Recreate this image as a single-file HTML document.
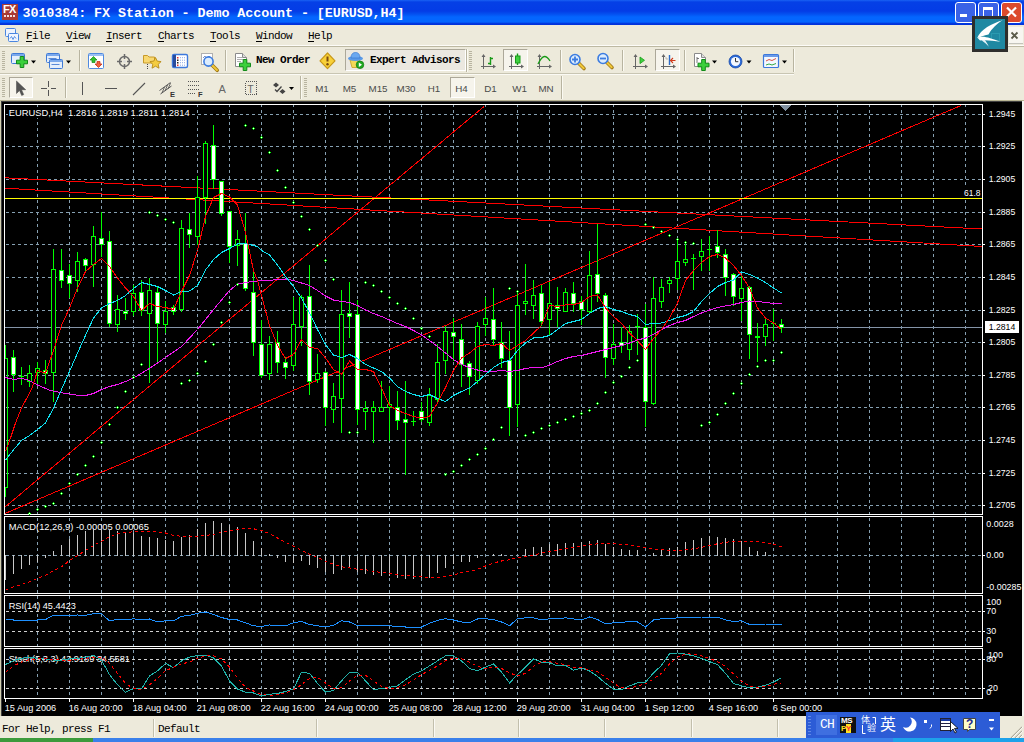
<!DOCTYPE html>
<html><head><meta charset="utf-8"><title>3010384: FX Station - Demo Account - [EURUSD,H4]</title>
<style>
html,body{margin:0;padding:0}
body{width:1024px;height:742px;position:relative;overflow:hidden;background:#edeadb;font-family:"Liberation Mono","Noto Sans CJK SC",monospace;font-size:11px;color:#000}
.abs,body>div,body>svg,body>span{position:absolute}
#title{left:0;top:0;width:1024px;height:25px;background:linear-gradient(#1a62f4 0,#0540e6 2px,#043ce6 11px,#0450f0 14px,#0466ff 17px,#0466ff 22px,#0238e0 23.5px,#0230d8 25px)}
#ttext{left:22.5px;top:6px;color:#fff;font-weight:bold;font-size:13.4px;letter-spacing:-0.08px;line-height:16px;white-space:pre}
.cap{top:2px;width:19px;height:19px;border:1px solid #fff;border-radius:3px;background:#3a62e6;box-sizing:content-box}
.mi{top:30px;font-size:11px;letter-spacing:-0.6px;line-height:12px;white-space:pre}
.mi u{text-decoration:underline;text-underline-offset:1.5px;text-decoration-thickness:1px}
.tbt{font-size:11px;letter-spacing:-0.6px;line-height:12px;white-space:pre;font-weight:bold}
.sep{width:1px;background:#c2bfac;box-shadow:1px 0 0 #fbfaf4}
.tf{top:83px;font-family:"Liberation Sans",sans-serif;font-size:9.8px;color:#4a4a4a;line-height:12px;width:30px;text-align:center}
.pressed{background:#f6f4ec;border:1px solid #c9c6b6;border-color:#aca899 #fff #fff #aca899;box-sizing:border-box}
.st{top:723px;font-size:11px;letter-spacing:-0.6px;line-height:12px;white-space:pre}
</style></head><body>
<div id="title"></div>
<div style="left:2px;top:4px;width:16px;height:16px;background:#a83a36"></div>
<span style="left:3px;top:4px;color:#fff;font:bold 11px/11px 'Liberation Sans',sans-serif;letter-spacing:-0.8px">FX</span>
<div style="left:4px;top:15px;width:12px;height:2px;background:repeating-linear-gradient(90deg,#f4e0e0 0,#f4e0e0 2px,transparent 2px,transparent 3px)"></div>
<span id="ttext">3010384: FX Station - Demo Account - [EURUSD,H4]</span>
<div class="cap" style="left:955px"></div><div class="cap" style="left:978px"></div><div class="cap" style="left:1001px;background:#dc4a2c"></div>
<!-- menu -->
<div style="left:0;top:45px;width:1024px;height:1px;background:#fdfcf8"></div>
<div style="left:0;top:46px;width:1024px;height:1px;background:#bdb9a2"></div>
<span class="mi" style="left:26px"><u>F</u>ile</span>
<span class="mi" style="left:66px"><u>V</u>iew</span>
<span class="mi" style="left:106px"><u>I</u>nsert</span>
<span class="mi" style="left:158px"><u>C</u>harts</span>
<span class="mi" style="left:210px"><u>T</u>ools</span>
<span class="mi" style="left:256px"><u>W</u>indow</span>
<span class="mi" style="left:308px"><u>H</u>elp</span>
<!-- toolbars -->
<div style="left:0;top:73px;width:794px;height:1px;background:#c8c5b2"></div>
<div style="left:0;top:74px;width:794px;height:1px;background:#fbfaf4"></div>
<span class="tbt" style="left:256px;top:54px">New Order</span>
<div class="pressed" style="left:345px;top:49px;width:121px;height:22px;background:#ebe8e0"></div>
<span class="tbt" style="left:370px;top:54px">Expert Advisors</span>
<div class="pressed" style="left:9px;top:77px;width:24px;height:21px"></div>
<div class="pressed" style="left:450px;top:77px;width:25px;height:21px"></div>
<div class="pressed" style="left:503px;top:49px;width:25px;height:22px"></div>
<div class="pressed" style="left:655px;top:49px;width:25px;height:22px"></div>
<span class="tf" style="left:307px">M1</span><span class="tf" style="left:334.5px">M5</span><span class="tf" style="left:363px">M15</span><span class="tf" style="left:391px">M30</span><span class="tf" style="left:419px">H1</span><span class="tf" style="left:446.5px">H4</span><span class="tf" style="left:475.5px">D1</span><span class="tf" style="left:504.5px">W1</span><span class="tf" style="left:531px">MN</span>
<svg id="icons" width="1024" height="101" viewBox="0 0 1024 101" style="left:0;top:0">
<g><rect x="5.5" y="28.5" width="10" height="8" rx="1" fill="#eef4fe" stroke="#4a86e0"/><rect x="8.5" y="33.5" width="10" height="8" rx="1" fill="#eef4fe" stroke="#4a86e0"/><path d="M10 38.5l1.5 -2 1.5 3 1.5 -3 1.5 2" fill="none" stroke="#4a86e0" stroke-width="0.9"/></g>
<line x1="3.5" y1="51" x2="3.5" y2="71" stroke="#b8b4a0" stroke-dasharray="1 1" stroke-width="3" shape-rendering="crispEdges"/>
<rect x="11.5" y="53.5" width="13" height="10" rx="1" fill="#e4eefc" stroke="#3f7ad6"/><rect x="12" y="54" width="12" height="2" fill="#7aa8ec"/>
<path d="M20.2 56.5h3.6v3.7h3.7v3.6h-3.7v3.7h-3.6v-3.7h-3.7v-3.6h3.7z" fill="#3bd03b" stroke="#118a18" stroke-width="1" stroke-linejoin="round"/>
<path d="M31 60.5h5l-2.5 3z" fill="#000"/>
<rect x="46.5" y="53.5" width="13" height="9" rx="1" fill="#e4eefc" stroke="#3f7ad6"/><rect x="47" y="54" width="12" height="2" fill="#7aa8ec"/>
<rect x="49.5" y="59.5" width="13" height="9" rx="1" fill="#e4eefc" stroke="#3f7ad6"/><rect x="50" y="60" width="12" height="2" fill="#7aa8ec"/>
<path d="M51.5 64.5h8" stroke="#5a8ad8" stroke-width="1"/><path d="M48.500 58.5h8" stroke="#5a8ad8" stroke-width="1"/>
<path d="M66 60.5h5l-2.5 3z" fill="#000"/>
<line x1="79.5" y1="50" x2="79.5" y2="71" stroke="#b8b4a0" shape-rendering="crispEdges"/><line x1="80.5" y1="50" x2="80.5" y2="71" stroke="#fbfaf2" shape-rendering="crispEdges"/>
<rect x="88.5" y="53.5" width="15" height="15" rx="1" fill="#fff" stroke="#4f8ae0"/><rect x="89" y="54" width="14" height="2" fill="#9cc0f4"/>
<path d="M93.500 56.5l3.500 3.500h-2v2.500h-3v-2.500h-2z" fill="#30c030" stroke="#148a14" stroke-width="0.7"/><path d="M98.500 67.500l-3.500 -3.500h2v-2.500h3v2.500h2z" fill="#f06040" stroke="#c02810" stroke-width="0.7"/>
<g stroke="#6a6a6a" fill="none"><circle cx="124.500" cy="61.5" r="5" stroke-width="1.500"/><path d="M124.500 54v5M124.500 64v5M117 61.500h5M127 61.500h5" stroke-width="1.500"/></g><circle cx="124.500" cy="61.5" r="1.300" fill="#ddd"/>
<path d="M143.500 55.500h4l1.500 1.500h5.500v6h-11z" fill="#f8d870" stroke="#c89a28"/><path d="M147.500 64v5" stroke="#444" stroke-dasharray="1 1" shape-rendering="crispEdges"/>
<path d="M155.500 57.500l1.700 3.600 3.900 0.500 -2.900 2.700 0.800 3.900 -3.500 -2 -3.500 2 0.800 -3.900 -2.900 -2.700 3.900 -0.500z" fill="#f4cc40" stroke="#b88a18" stroke-width="0.9"/>
<rect x="172.500" y="54.500" width="15" height="13" rx="1.500" fill="#fff" stroke="#3c78dc" stroke-width="1.400"/><rect x="173" y="55" width="3" height="12" fill="#2a4c9c"/>
<rect x="177" y="57.0" width="1.500" height="1.500" fill="#e03030"/><path d="M180 57.7h6" stroke="#8aa8e8" stroke-dasharray="1 1"/>
<rect x="177" y="59.5" width="1.500" height="1.500" fill="#222"/><path d="M180 60.2h6" stroke="#8aa8e8" stroke-dasharray="1 1"/>
<rect x="177" y="62.0" width="1.500" height="1.500" fill="#222"/><path d="M180 62.7h6" stroke="#8aa8e8" stroke-dasharray="1 1"/>
<rect x="177" y="64.5" width="1.500" height="1.500" fill="#e03030"/><path d="M180 65.2h6" stroke="#8aa8e8" stroke-dasharray="1 1"/>
<rect x="201.500" y="53.500" width="11" height="11" fill="#fff" stroke="#b0b0b0"/><path d="M203 58l2 -2 2 3 2 -3 2 2" fill="none" stroke="#5a7ab8" stroke-width="0.800"/>
<line x1="211.72" y1="64.72" x2="217.22" y2="70.22" stroke="#a07818" stroke-width="3.6" stroke-linecap="round"/><line x1="212.22" y1="65.22" x2="216.92" y2="69.92" stroke="#f0c838" stroke-width="2" stroke-linecap="round"/>
<circle cx="208.5" cy="61.5" r="4.6" fill="#dcecfc" stroke="#3c7ce0" stroke-width="1.6"/>
<line x1="225.5" y1="50" x2="225.5" y2="71" stroke="#b8b4a0" shape-rendering="crispEdges"/><line x1="226.5" y1="50" x2="226.5" y2="71" stroke="#fbfaf2" shape-rendering="crispEdges"/>
<path d="M235.5 53.5h7l4 4v9h-11z" fill="#fff" stroke="#8a8a8a"/><path d="M242.5 53.5v4h4" fill="#ddd" stroke="#8a8a8a"/>
<path d="M237 57.500h5M237 59.500h6M237 61.500h4" stroke="#9a9a9a" stroke-width="0.800"/>
<path d="M243.2 59.5h3.6v3.7h3.7v3.6h-3.7v3.7h-3.6v-3.7h-3.7v-3.6h3.7z" fill="#3bd03b" stroke="#118a18" stroke-width="1" stroke-linejoin="round"/>
<path d="M327.500 53l7.500 7.800 -7.500 7.800 -7.500 -7.800z" fill="#f8d038" stroke="#c89818" stroke-width="1.200" stroke-linejoin="round"/><path d="M327.500 56.500v5" stroke="#7a4a10" stroke-width="2"/><circle cx="327.500" cy="64.300" r="1.200" fill="#7a4a10"/>
<path d="M350 60h9.500l-1 7.500h-6.500z" fill="#f4d858" stroke="#c8a020" stroke-width="0.800"/><ellipse cx="355.500" cy="58.500" rx="7.500" ry="2.600" fill="#5a9ae8"/><path d="M351 58c0 -4 2 -5.500 4.500 -5.500s4.500 1.500 4.500 5.500z" fill="#6aa8f0" stroke="#3a78d0" stroke-width="0.700"/><circle cx="360" cy="64.800" r="3.800" fill="#20a820" stroke="#0c780c" stroke-width="0.700"/><path d="M358.800 62.600l3.200 2.200 -3.200 2.200z" fill="#fff"/>
<line x1="466.5" y1="49" x2="466.5" y2="72" stroke="#b8b4a0" shape-rendering="crispEdges"/><line x1="467.5" y1="49" x2="467.5" y2="72" stroke="#fbfaf2" shape-rendering="crispEdges"/>
<line x1="470.5" y1="51" x2="470.5" y2="71" stroke="#b8b4a0" stroke-dasharray="1 1" stroke-width="3" shape-rendering="crispEdges"/>
<g stroke="#666" fill="#666" shape-rendering="crispEdges"><line x1="483.5" y1="56" x2="483.5" y2="69"/><line x1="481" y1="66.5" x2="494" y2="66.5"/></g>
<path d="M483.5 54l2 3h-4zM496 66.5l-3 -2v4z" fill="#666"/>
<path d="M490.500 57v8M490.500 58.500h2.500M488 63.500h2.500" stroke="#189a18" stroke-width="1.400" fill="none"/>
<g stroke="#666" fill="#666" shape-rendering="crispEdges"><line x1="511.5" y1="56" x2="511.5" y2="69"/><line x1="509" y1="66.5" x2="522" y2="66.5"/></g>
<path d="M511.5 54l2 3h-4zM524 66.5l-3 -2v4z" fill="#666"/>
<path d="M517.500 53.500v11.500" stroke="#189a18" stroke-width="1.400"/><rect x="515.500" y="56" width="4.500" height="7" fill="#40d040" stroke="#189a18"/>
<g stroke="#666" fill="#666" shape-rendering="crispEdges"><line x1="539.5" y1="56" x2="539.5" y2="69"/><line x1="537" y1="66.5" x2="550" y2="66.5"/></g>
<path d="M539.5 54l2 3h-4zM552 66.5l-3 -2v4z" fill="#666"/>
<path d="M538 64c2 -4 4 -7.500 6.500 -7.500s4 2 5.500 4.500" fill="none" stroke="#189a18" stroke-width="1.300"/>
<line x1="560.5" y1="50" x2="560.5" y2="71" stroke="#b8b4a0" shape-rendering="crispEdges"/><line x1="561.5" y1="50" x2="561.5" y2="71" stroke="#fbfaf2" shape-rendering="crispEdges"/>
<line x1="578.5" y1="63.0" x2="584.0" y2="68.5" stroke="#a07818" stroke-width="3.6" stroke-linecap="round"/><line x1="579.0" y1="63.5" x2="583.7" y2="68.2" stroke="#f0c838" stroke-width="2" stroke-linecap="round"/>
<circle cx="575" cy="59.5" r="5" fill="#dcecfc" stroke="#3c7ce0" stroke-width="1.6"/>
<path d="M572 59.5h6M575 56.5v6" stroke="#3c7ce0" stroke-width="1.8"/>
<line x1="606.5" y1="62.0" x2="612.0" y2="67.5" stroke="#a07818" stroke-width="3.6" stroke-linecap="round"/><line x1="607.0" y1="62.5" x2="611.7" y2="67.2" stroke="#f0c838" stroke-width="2" stroke-linecap="round"/>
<circle cx="603" cy="58.5" r="5" fill="#dcecfc" stroke="#3c7ce0" stroke-width="1.6"/>
<path d="M600 58.5h6" stroke="#3c7ce0" stroke-width="1.8"/>
<line x1="622.5" y1="50" x2="622.5" y2="71" stroke="#b8b4a0" shape-rendering="crispEdges"/><line x1="623.5" y1="50" x2="623.5" y2="71" stroke="#fbfaf2" shape-rendering="crispEdges"/>
<g stroke="#666" fill="#666" shape-rendering="crispEdges"><line x1="635.5" y1="56" x2="635.5" y2="69"/><line x1="633" y1="66.5" x2="646" y2="66.5"/></g>
<path d="M635.5 54l2 3h-4zM648 66.5l-3 -2v4z" fill="#666"/>
<path d="M640 57l4.500 3.300 -4.500 3.300z" fill="#40d040" stroke="#189a18" stroke-width="0.800"/>
<g stroke="#666" fill="#666" shape-rendering="crispEdges"><line x1="663.5" y1="56" x2="663.5" y2="69"/><line x1="661" y1="66.5" x2="674" y2="66.5"/></g>
<path d="M663.5 54l2 3h-4zM676 66.5l-3 -2v4z" fill="#666"/>
<path d="M669.500 55v10" stroke="#2a6ac8" stroke-width="1.400"/><path d="M675.500 60.500h-4M673 58l-2.500 2.500 2.500 2.500" fill="none" stroke="#d03818" stroke-width="1.100"/><path d="M665 58h2v2" stroke="#aaa" fill="none" stroke-width="0.800"/>
<line x1="684.5" y1="50" x2="684.5" y2="71" stroke="#b8b4a0" shape-rendering="crispEdges"/><line x1="685.5" y1="50" x2="685.5" y2="71" stroke="#fbfaf2" shape-rendering="crispEdges"/>
<path d="M694.5 53.5h7l4 4v9h-11z" fill="#fff" stroke="#8a8a8a"/><path d="M701.5 53.5v4h4" fill="#ddd" stroke="#8a8a8a"/>
<path d="M697 57v6M697 58.500h2" stroke="#666" stroke-width="0.900" fill="none"/>
<path d="M701.7 59.5h3.6v3.7h3.7v3.6h-3.7v3.7h-3.6v-3.7h-3.7v-3.6h3.7z" fill="#3bd03b" stroke="#118a18" stroke-width="1" stroke-linejoin="round"/>
<path d="M712 60.5h5l-2.5 3z" fill="#000"/>
<circle cx="735.500" cy="61.500" r="6.500" fill="#2a6ad8" stroke="#1a4aa8" stroke-width="0.800"/><circle cx="735.500" cy="61.500" r="4.600" fill="#f4f8ff"/><path d="M735.500 58v3.700h2.800" fill="none" stroke="#333" stroke-width="1"/>
<path d="M746.5 60.5h5l-2.5 3z" fill="#000"/>
<rect x="763.500" y="54.500" width="15" height="13" rx="1" fill="#f4f8ff" stroke="#3c78dc" stroke-width="1.200"/><rect x="764" y="55" width="14" height="2" fill="#6a9ae8"/><path d="M766 61l3 -1.500 3 1 4 -2" fill="none" stroke="#d04030" stroke-width="0.900"/><path d="M766 65l3 -1 3 1 4 -1.500" fill="none" stroke="#20a030" stroke-width="0.900"/>
<path d="M782 60.5h5l-2.5 3z" fill="#000"/>
<line x1="793.5" y1="49" x2="793.5" y2="72" stroke="#b8b4a0" shape-rendering="crispEdges"/><line x1="794.5" y1="49" x2="794.5" y2="72" stroke="#fbfaf2" shape-rendering="crispEdges"/>
<line x1="3.5" y1="78" x2="3.5" y2="98" stroke="#b8b4a0" stroke-dasharray="1 1" stroke-width="3" shape-rendering="crispEdges"/>
<path d="M16.500 81v12.500l3 -3 2.200 5 2 -0.900 -2.200 -4.900h4.200z" fill="#555" stroke="#444" stroke-width="0.500"/>
<path d="M48.500 81v5.500M48.500 90v5.500M41 88.500h5.500M50.500 88.500h5.500" stroke="#555" shape-rendering="crispEdges"/>
<line x1="65.5" y1="77" x2="65.5" y2="98" stroke="#b8b4a0" shape-rendering="crispEdges"/><line x1="66.5" y1="77" x2="66.5" y2="98" stroke="#fbfaf2" shape-rendering="crispEdges"/>
<path d="M82.500 82v13" stroke="#555" shape-rendering="crispEdges"/>
<path d="M105 88.500h12" stroke="#555" shape-rendering="crispEdges"/>
<path d="M133 95l12 -12" stroke="#555" stroke-width="1.100"/>
<path d="M159.500 90.500l11 -8M160.500 94l11 -8" stroke="#555" stroke-width="1" fill="none"/><path d="M162 93l2.500 -6M165 91l2.500 -6M168 89l2.500 -6" stroke="#555" stroke-width="0.900"/>
<text x="170" y="96.500" font-family="Liberation Sans,sans-serif" font-size="7.5" font-weight="bold" fill="#333">E</text>
<path d="M188 81.5H200" stroke="#555" stroke-dasharray="1 1" shape-rendering="crispEdges"/>
<path d="M188 85.5H200" stroke="#555" stroke-dasharray="1 1" shape-rendering="crispEdges"/>
<path d="M188 89.5H200" stroke="#555" stroke-dasharray="1 1" shape-rendering="crispEdges"/>
<path d="M188 93.5H196" stroke="#555" stroke-dasharray="1 1" shape-rendering="crispEdges"/>
<text x="198" y="96.500" font-family="Liberation Sans,sans-serif" font-size="7.5" font-weight="bold" fill="#333">F</text>
<text x="218.500" y="92.500" font-family="Liberation Sans,sans-serif" font-size="11" fill="#666">A</text>
<rect x="245.500" y="81.500" width="11" height="13" fill="none" stroke="#555" stroke-dasharray="1 1" shape-rendering="crispEdges"/><text x="247.500" y="92.500" font-family="Liberation Sans,sans-serif" font-size="10" fill="#666">T</text>
<path d="M276 82.500l3 2.500 -3 2.500 -3 -2.500zM282.500 89l3 2.500 -3 2.500 -3 -2.500z" fill="#444"/><path d="M275 89.500l2 2 4.500 -5" fill="none" stroke="#444" stroke-width="1.300"/>
<path d="M289 87h5l-2.5 3z" fill="#000"/>
<line x1="300.5" y1="76" x2="300.5" y2="99" stroke="#b8b4a0" shape-rendering="crispEdges"/><line x1="301.5" y1="76" x2="301.5" y2="99" stroke="#fbfaf2" shape-rendering="crispEdges"/>
<line x1="305.5" y1="78" x2="305.5" y2="98" stroke="#b8b4a0" stroke-dasharray="1 1" stroke-width="3" shape-rendering="crispEdges"/>
<line x1="561.5" y1="76" x2="561.5" y2="99" stroke="#b8b4a0" shape-rendering="crispEdges"/><line x1="562.5" y1="76" x2="562.5" y2="99" stroke="#fbfaf2" shape-rendering="crispEdges"/>
<rect x="960" y="14" width="7" height="3" fill="#fff"/>
<rect x="983.500" y="7.500" width="9" height="9" fill="none" stroke="#fff" stroke-width="1"/><rect x="983" y="7" width="10" height="3" fill="#fff"/>
<path d="M1007 7.500l9 9M1016 7.500l-9 9" stroke="#fff" stroke-width="2.200"/>
<rect x="1009" y="27" width="14" height="17" fill="#f7f6f0"/><path d="M1009 43.500h14" stroke="#c4c4bc"/><path d="M1011.500 32.500l6 6M1017.500 32.500l-6 6" stroke="#5a5a48" stroke-width="1.800"/>
<rect x="973.5" y="17.5" width="33" height="33" fill="#1f88a2" stroke="#2e2e2c" stroke-width="3"/>
<rect x="991.500" y="33.500" width="8" height="7" fill="none" stroke="#2a9ab0" stroke-width="1"/>
<path d="M1002.600 20.300C992 23.500 980.500 29.500 977.200 38C980 37 984 35.500 988.500 34.500C991.500 29 997 23.500 1002.600 20.300Z" fill="#fff"/>
<path d="M977.500 37.800C983 35.300 990 38 1000.500 41.800C993 40.800 986 39.600 980 40.500Z" fill="#fff"/>
<path d="M981.500 40.200C984 42 987 44 988.800 46.800C987.200 43.200 985.800 41.200 984.800 39.800Z" fill="#e4f2f8"/>
</svg>
<!-- chart window -->
<div style="left:0;top:100px;width:1024px;height:1px;background:#b9b594"></div>
<div style="left:0;top:101px;width:1px;height:615px;background:#d4d0b0"></div>
<div style="left:1022px;top:101px;width:2px;height:615px;background:#f4f4f0"></div>
<div style="left:1px;top:101px;width:1021px;height:615px;background:#000"></div>
<div style="left:1px;top:101px;width:1px;height:615px;background:#404040"></div>
<div style="left:1px;top:101px;width:1021px;height:1px;background:#404040"></div>
<svg id="chart" width="1024" height="742" viewBox="0 0 1024 742" shape-rendering="crispEdges" xml:space="preserve" style="white-space:pre" font-family="'Liberation Sans',Arial,sans-serif" font-size="9.7">
<rect x="4.5" y="104.5" width="978" height="410" fill="none" stroke="#fff"/>
<rect x="4.5" y="516.5" width="978" height="77" fill="none" stroke="#fff"/>
<rect x="4.5" y="595.5" width="978" height="51" fill="none" stroke="#fff"/>
<rect x="4.5" y="648.5" width="978" height="50" fill="none" stroke="#fff"/>
<line x1="37.5" y1="105" x2="37.5" y2="514" stroke="#86a0b2" stroke-dasharray="3 3" stroke-dashoffset="1"/>
<line x1="69.5" y1="105" x2="69.5" y2="514" stroke="#86a0b2" stroke-dasharray="3 3" stroke-dashoffset="1"/>
<line x1="101.5" y1="105" x2="101.5" y2="514" stroke="#86a0b2" stroke-dasharray="3 3" stroke-dashoffset="1"/>
<line x1="133.5" y1="105" x2="133.5" y2="514" stroke="#86a0b2" stroke-dasharray="3 3" stroke-dashoffset="1"/>
<line x1="165.5" y1="105" x2="165.5" y2="514" stroke="#86a0b2" stroke-dasharray="3 3" stroke-dashoffset="1"/>
<line x1="197.5" y1="105" x2="197.5" y2="514" stroke="#86a0b2" stroke-dasharray="3 3" stroke-dashoffset="1"/>
<line x1="229.5" y1="105" x2="229.5" y2="514" stroke="#86a0b2" stroke-dasharray="3 3" stroke-dashoffset="1"/>
<line x1="261.5" y1="105" x2="261.5" y2="514" stroke="#86a0b2" stroke-dasharray="3 3" stroke-dashoffset="1"/>
<line x1="293.5" y1="105" x2="293.5" y2="514" stroke="#86a0b2" stroke-dasharray="3 3" stroke-dashoffset="1"/>
<line x1="325.5" y1="105" x2="325.5" y2="514" stroke="#86a0b2" stroke-dasharray="3 3" stroke-dashoffset="1"/>
<line x1="357.5" y1="105" x2="357.5" y2="514" stroke="#86a0b2" stroke-dasharray="3 3" stroke-dashoffset="1"/>
<line x1="389.5" y1="105" x2="389.5" y2="514" stroke="#86a0b2" stroke-dasharray="3 3" stroke-dashoffset="1"/>
<line x1="421.5" y1="105" x2="421.5" y2="514" stroke="#86a0b2" stroke-dasharray="3 3" stroke-dashoffset="1"/>
<line x1="453.5" y1="105" x2="453.5" y2="514" stroke="#86a0b2" stroke-dasharray="3 3" stroke-dashoffset="1"/>
<line x1="485.5" y1="105" x2="485.5" y2="514" stroke="#86a0b2" stroke-dasharray="3 3" stroke-dashoffset="1"/>
<line x1="517.5" y1="105" x2="517.5" y2="514" stroke="#86a0b2" stroke-dasharray="3 3" stroke-dashoffset="1"/>
<line x1="549.5" y1="105" x2="549.5" y2="514" stroke="#86a0b2" stroke-dasharray="3 3" stroke-dashoffset="1"/>
<line x1="581.5" y1="105" x2="581.5" y2="514" stroke="#86a0b2" stroke-dasharray="3 3" stroke-dashoffset="1"/>
<line x1="613.5" y1="105" x2="613.5" y2="514" stroke="#86a0b2" stroke-dasharray="3 3" stroke-dashoffset="1"/>
<line x1="645.5" y1="105" x2="645.5" y2="514" stroke="#86a0b2" stroke-dasharray="3 3" stroke-dashoffset="1"/>
<line x1="677.5" y1="105" x2="677.5" y2="514" stroke="#86a0b2" stroke-dasharray="3 3" stroke-dashoffset="1"/>
<line x1="709.5" y1="105" x2="709.5" y2="514" stroke="#86a0b2" stroke-dasharray="3 3" stroke-dashoffset="1"/>
<line x1="741.5" y1="105" x2="741.5" y2="514" stroke="#86a0b2" stroke-dasharray="3 3" stroke-dashoffset="1"/>
<line x1="773.5" y1="105" x2="773.5" y2="514" stroke="#86a0b2" stroke-dasharray="3 3" stroke-dashoffset="1"/>
<line x1="805.5" y1="105" x2="805.5" y2="514" stroke="#86a0b2" stroke-dasharray="3 3" stroke-dashoffset="1"/>
<line x1="837.5" y1="105" x2="837.5" y2="514" stroke="#86a0b2" stroke-dasharray="3 3" stroke-dashoffset="1"/>
<line x1="869.5" y1="105" x2="869.5" y2="514" stroke="#86a0b2" stroke-dasharray="3 3" stroke-dashoffset="1"/>
<line x1="901.5" y1="105" x2="901.5" y2="514" stroke="#86a0b2" stroke-dasharray="3 3" stroke-dashoffset="1"/>
<line x1="933.5" y1="105" x2="933.5" y2="514" stroke="#86a0b2" stroke-dasharray="3 3" stroke-dashoffset="1"/>
<line x1="965.5" y1="105" x2="965.5" y2="514" stroke="#86a0b2" stroke-dasharray="3 3" stroke-dashoffset="1"/>
<line x1="37.5" y1="517" x2="37.5" y2="593" stroke="#86a0b2" stroke-dasharray="3 3" stroke-dashoffset="5"/>
<line x1="69.5" y1="517" x2="69.5" y2="593" stroke="#86a0b2" stroke-dasharray="3 3" stroke-dashoffset="5"/>
<line x1="101.5" y1="517" x2="101.5" y2="593" stroke="#86a0b2" stroke-dasharray="3 3" stroke-dashoffset="5"/>
<line x1="133.5" y1="517" x2="133.5" y2="593" stroke="#86a0b2" stroke-dasharray="3 3" stroke-dashoffset="5"/>
<line x1="165.5" y1="517" x2="165.5" y2="593" stroke="#86a0b2" stroke-dasharray="3 3" stroke-dashoffset="5"/>
<line x1="197.5" y1="517" x2="197.5" y2="593" stroke="#86a0b2" stroke-dasharray="3 3" stroke-dashoffset="5"/>
<line x1="229.5" y1="517" x2="229.5" y2="593" stroke="#86a0b2" stroke-dasharray="3 3" stroke-dashoffset="5"/>
<line x1="261.5" y1="517" x2="261.5" y2="593" stroke="#86a0b2" stroke-dasharray="3 3" stroke-dashoffset="5"/>
<line x1="293.5" y1="517" x2="293.5" y2="593" stroke="#86a0b2" stroke-dasharray="3 3" stroke-dashoffset="5"/>
<line x1="325.5" y1="517" x2="325.5" y2="593" stroke="#86a0b2" stroke-dasharray="3 3" stroke-dashoffset="5"/>
<line x1="357.5" y1="517" x2="357.5" y2="593" stroke="#86a0b2" stroke-dasharray="3 3" stroke-dashoffset="5"/>
<line x1="389.5" y1="517" x2="389.5" y2="593" stroke="#86a0b2" stroke-dasharray="3 3" stroke-dashoffset="5"/>
<line x1="421.5" y1="517" x2="421.5" y2="593" stroke="#86a0b2" stroke-dasharray="3 3" stroke-dashoffset="5"/>
<line x1="453.5" y1="517" x2="453.5" y2="593" stroke="#86a0b2" stroke-dasharray="3 3" stroke-dashoffset="5"/>
<line x1="485.5" y1="517" x2="485.5" y2="593" stroke="#86a0b2" stroke-dasharray="3 3" stroke-dashoffset="5"/>
<line x1="517.5" y1="517" x2="517.5" y2="593" stroke="#86a0b2" stroke-dasharray="3 3" stroke-dashoffset="5"/>
<line x1="549.5" y1="517" x2="549.5" y2="593" stroke="#86a0b2" stroke-dasharray="3 3" stroke-dashoffset="5"/>
<line x1="581.5" y1="517" x2="581.5" y2="593" stroke="#86a0b2" stroke-dasharray="3 3" stroke-dashoffset="5"/>
<line x1="613.5" y1="517" x2="613.5" y2="593" stroke="#86a0b2" stroke-dasharray="3 3" stroke-dashoffset="5"/>
<line x1="645.5" y1="517" x2="645.5" y2="593" stroke="#86a0b2" stroke-dasharray="3 3" stroke-dashoffset="5"/>
<line x1="677.5" y1="517" x2="677.5" y2="593" stroke="#86a0b2" stroke-dasharray="3 3" stroke-dashoffset="5"/>
<line x1="709.5" y1="517" x2="709.5" y2="593" stroke="#86a0b2" stroke-dasharray="3 3" stroke-dashoffset="5"/>
<line x1="741.5" y1="517" x2="741.5" y2="593" stroke="#86a0b2" stroke-dasharray="3 3" stroke-dashoffset="5"/>
<line x1="773.5" y1="517" x2="773.5" y2="593" stroke="#86a0b2" stroke-dasharray="3 3" stroke-dashoffset="5"/>
<line x1="805.5" y1="517" x2="805.5" y2="593" stroke="#86a0b2" stroke-dasharray="3 3" stroke-dashoffset="5"/>
<line x1="837.5" y1="517" x2="837.5" y2="593" stroke="#86a0b2" stroke-dasharray="3 3" stroke-dashoffset="5"/>
<line x1="869.5" y1="517" x2="869.5" y2="593" stroke="#86a0b2" stroke-dasharray="3 3" stroke-dashoffset="5"/>
<line x1="901.5" y1="517" x2="901.5" y2="593" stroke="#86a0b2" stroke-dasharray="3 3" stroke-dashoffset="5"/>
<line x1="933.5" y1="517" x2="933.5" y2="593" stroke="#86a0b2" stroke-dasharray="3 3" stroke-dashoffset="5"/>
<line x1="965.5" y1="517" x2="965.5" y2="593" stroke="#86a0b2" stroke-dasharray="3 3" stroke-dashoffset="5"/>
<line x1="37.5" y1="596" x2="37.5" y2="646" stroke="#86a0b2" stroke-dasharray="3 3" stroke-dashoffset="0"/>
<line x1="69.5" y1="596" x2="69.5" y2="646" stroke="#86a0b2" stroke-dasharray="3 3" stroke-dashoffset="0"/>
<line x1="101.5" y1="596" x2="101.5" y2="646" stroke="#86a0b2" stroke-dasharray="3 3" stroke-dashoffset="0"/>
<line x1="133.5" y1="596" x2="133.5" y2="646" stroke="#86a0b2" stroke-dasharray="3 3" stroke-dashoffset="0"/>
<line x1="165.5" y1="596" x2="165.5" y2="646" stroke="#86a0b2" stroke-dasharray="3 3" stroke-dashoffset="0"/>
<line x1="197.5" y1="596" x2="197.5" y2="646" stroke="#86a0b2" stroke-dasharray="3 3" stroke-dashoffset="0"/>
<line x1="229.5" y1="596" x2="229.5" y2="646" stroke="#86a0b2" stroke-dasharray="3 3" stroke-dashoffset="0"/>
<line x1="261.5" y1="596" x2="261.5" y2="646" stroke="#86a0b2" stroke-dasharray="3 3" stroke-dashoffset="0"/>
<line x1="293.5" y1="596" x2="293.5" y2="646" stroke="#86a0b2" stroke-dasharray="3 3" stroke-dashoffset="0"/>
<line x1="325.5" y1="596" x2="325.5" y2="646" stroke="#86a0b2" stroke-dasharray="3 3" stroke-dashoffset="0"/>
<line x1="357.5" y1="596" x2="357.5" y2="646" stroke="#86a0b2" stroke-dasharray="3 3" stroke-dashoffset="0"/>
<line x1="389.5" y1="596" x2="389.5" y2="646" stroke="#86a0b2" stroke-dasharray="3 3" stroke-dashoffset="0"/>
<line x1="421.5" y1="596" x2="421.5" y2="646" stroke="#86a0b2" stroke-dasharray="3 3" stroke-dashoffset="0"/>
<line x1="453.5" y1="596" x2="453.5" y2="646" stroke="#86a0b2" stroke-dasharray="3 3" stroke-dashoffset="0"/>
<line x1="485.5" y1="596" x2="485.5" y2="646" stroke="#86a0b2" stroke-dasharray="3 3" stroke-dashoffset="0"/>
<line x1="517.5" y1="596" x2="517.5" y2="646" stroke="#86a0b2" stroke-dasharray="3 3" stroke-dashoffset="0"/>
<line x1="549.5" y1="596" x2="549.5" y2="646" stroke="#86a0b2" stroke-dasharray="3 3" stroke-dashoffset="0"/>
<line x1="581.5" y1="596" x2="581.5" y2="646" stroke="#86a0b2" stroke-dasharray="3 3" stroke-dashoffset="0"/>
<line x1="613.5" y1="596" x2="613.5" y2="646" stroke="#86a0b2" stroke-dasharray="3 3" stroke-dashoffset="0"/>
<line x1="645.5" y1="596" x2="645.5" y2="646" stroke="#86a0b2" stroke-dasharray="3 3" stroke-dashoffset="0"/>
<line x1="677.5" y1="596" x2="677.5" y2="646" stroke="#86a0b2" stroke-dasharray="3 3" stroke-dashoffset="0"/>
<line x1="709.5" y1="596" x2="709.5" y2="646" stroke="#86a0b2" stroke-dasharray="3 3" stroke-dashoffset="0"/>
<line x1="741.5" y1="596" x2="741.5" y2="646" stroke="#86a0b2" stroke-dasharray="3 3" stroke-dashoffset="0"/>
<line x1="773.5" y1="596" x2="773.5" y2="646" stroke="#86a0b2" stroke-dasharray="3 3" stroke-dashoffset="0"/>
<line x1="805.5" y1="596" x2="805.5" y2="646" stroke="#86a0b2" stroke-dasharray="3 3" stroke-dashoffset="0"/>
<line x1="837.5" y1="596" x2="837.5" y2="646" stroke="#86a0b2" stroke-dasharray="3 3" stroke-dashoffset="0"/>
<line x1="869.5" y1="596" x2="869.5" y2="646" stroke="#86a0b2" stroke-dasharray="3 3" stroke-dashoffset="0"/>
<line x1="901.5" y1="596" x2="901.5" y2="646" stroke="#86a0b2" stroke-dasharray="3 3" stroke-dashoffset="0"/>
<line x1="933.5" y1="596" x2="933.5" y2="646" stroke="#86a0b2" stroke-dasharray="3 3" stroke-dashoffset="0"/>
<line x1="965.5" y1="596" x2="965.5" y2="646" stroke="#86a0b2" stroke-dasharray="3 3" stroke-dashoffset="0"/>
<line x1="37.5" y1="649" x2="37.5" y2="698" stroke="#86a0b2" stroke-dasharray="3 3" stroke-dashoffset="5"/>
<line x1="69.5" y1="649" x2="69.5" y2="698" stroke="#86a0b2" stroke-dasharray="3 3" stroke-dashoffset="5"/>
<line x1="101.5" y1="649" x2="101.5" y2="698" stroke="#86a0b2" stroke-dasharray="3 3" stroke-dashoffset="5"/>
<line x1="133.5" y1="649" x2="133.5" y2="698" stroke="#86a0b2" stroke-dasharray="3 3" stroke-dashoffset="5"/>
<line x1="165.5" y1="649" x2="165.5" y2="698" stroke="#86a0b2" stroke-dasharray="3 3" stroke-dashoffset="5"/>
<line x1="197.5" y1="649" x2="197.5" y2="698" stroke="#86a0b2" stroke-dasharray="3 3" stroke-dashoffset="5"/>
<line x1="229.5" y1="649" x2="229.5" y2="698" stroke="#86a0b2" stroke-dasharray="3 3" stroke-dashoffset="5"/>
<line x1="261.5" y1="649" x2="261.5" y2="698" stroke="#86a0b2" stroke-dasharray="3 3" stroke-dashoffset="5"/>
<line x1="293.5" y1="649" x2="293.5" y2="698" stroke="#86a0b2" stroke-dasharray="3 3" stroke-dashoffset="5"/>
<line x1="325.5" y1="649" x2="325.5" y2="698" stroke="#86a0b2" stroke-dasharray="3 3" stroke-dashoffset="5"/>
<line x1="357.5" y1="649" x2="357.5" y2="698" stroke="#86a0b2" stroke-dasharray="3 3" stroke-dashoffset="5"/>
<line x1="389.5" y1="649" x2="389.5" y2="698" stroke="#86a0b2" stroke-dasharray="3 3" stroke-dashoffset="5"/>
<line x1="421.5" y1="649" x2="421.5" y2="698" stroke="#86a0b2" stroke-dasharray="3 3" stroke-dashoffset="5"/>
<line x1="453.5" y1="649" x2="453.5" y2="698" stroke="#86a0b2" stroke-dasharray="3 3" stroke-dashoffset="5"/>
<line x1="485.5" y1="649" x2="485.5" y2="698" stroke="#86a0b2" stroke-dasharray="3 3" stroke-dashoffset="5"/>
<line x1="517.5" y1="649" x2="517.5" y2="698" stroke="#86a0b2" stroke-dasharray="3 3" stroke-dashoffset="5"/>
<line x1="549.5" y1="649" x2="549.5" y2="698" stroke="#86a0b2" stroke-dasharray="3 3" stroke-dashoffset="5"/>
<line x1="581.5" y1="649" x2="581.5" y2="698" stroke="#86a0b2" stroke-dasharray="3 3" stroke-dashoffset="5"/>
<line x1="613.5" y1="649" x2="613.5" y2="698" stroke="#86a0b2" stroke-dasharray="3 3" stroke-dashoffset="5"/>
<line x1="645.5" y1="649" x2="645.5" y2="698" stroke="#86a0b2" stroke-dasharray="3 3" stroke-dashoffset="5"/>
<line x1="677.5" y1="649" x2="677.5" y2="698" stroke="#86a0b2" stroke-dasharray="3 3" stroke-dashoffset="5"/>
<line x1="709.5" y1="649" x2="709.5" y2="698" stroke="#86a0b2" stroke-dasharray="3 3" stroke-dashoffset="5"/>
<line x1="741.5" y1="649" x2="741.5" y2="698" stroke="#86a0b2" stroke-dasharray="3 3" stroke-dashoffset="5"/>
<line x1="773.5" y1="649" x2="773.5" y2="698" stroke="#86a0b2" stroke-dasharray="3 3" stroke-dashoffset="5"/>
<line x1="805.5" y1="649" x2="805.5" y2="698" stroke="#86a0b2" stroke-dasharray="3 3" stroke-dashoffset="5"/>
<line x1="837.5" y1="649" x2="837.5" y2="698" stroke="#86a0b2" stroke-dasharray="3 3" stroke-dashoffset="5"/>
<line x1="869.5" y1="649" x2="869.5" y2="698" stroke="#86a0b2" stroke-dasharray="3 3" stroke-dashoffset="5"/>
<line x1="901.5" y1="649" x2="901.5" y2="698" stroke="#86a0b2" stroke-dasharray="3 3" stroke-dashoffset="5"/>
<line x1="933.5" y1="649" x2="933.5" y2="698" stroke="#86a0b2" stroke-dasharray="3 3" stroke-dashoffset="5"/>
<line x1="965.5" y1="649" x2="965.5" y2="698" stroke="#86a0b2" stroke-dasharray="3 3" stroke-dashoffset="5"/>
<line x1="5" y1="114.5" x2="982" y2="114.5" stroke="#86a0b2" stroke-width="1" stroke-dasharray="3 3" stroke-dashoffset="5"/>
<line x1="983" y1="114.5" x2="985" y2="114.5" stroke="#fff" stroke-width="1"/>
<text x="988.7" y="117" fill="#fff" text-anchor="start" textLength="26.6" lengthAdjust="spacingAndGlyphs">1.2945</text>
<line x1="5" y1="146.5" x2="982" y2="146.5" stroke="#86a0b2" stroke-width="1" stroke-dasharray="3 3" stroke-dashoffset="5"/>
<line x1="983" y1="146.5" x2="985" y2="146.5" stroke="#fff" stroke-width="1"/>
<text x="988.7" y="149" fill="#fff" text-anchor="start" textLength="26.6" lengthAdjust="spacingAndGlyphs">1.2925</text>
<line x1="5" y1="179.5" x2="982" y2="179.5" stroke="#86a0b2" stroke-width="1" stroke-dasharray="3 3" stroke-dashoffset="5"/>
<line x1="983" y1="179.5" x2="985" y2="179.5" stroke="#fff" stroke-width="1"/>
<text x="988.7" y="182" fill="#fff" text-anchor="start" textLength="26.6" lengthAdjust="spacingAndGlyphs">1.2905</text>
<line x1="5" y1="212.5" x2="982" y2="212.5" stroke="#86a0b2" stroke-width="1" stroke-dasharray="3 3" stroke-dashoffset="5"/>
<line x1="983" y1="212.5" x2="985" y2="212.5" stroke="#fff" stroke-width="1"/>
<text x="988.7" y="215" fill="#fff" text-anchor="start" textLength="26.6" lengthAdjust="spacingAndGlyphs">1.2885</text>
<line x1="5" y1="244.5" x2="982" y2="244.5" stroke="#86a0b2" stroke-width="1" stroke-dasharray="3 3" stroke-dashoffset="5"/>
<line x1="983" y1="244.5" x2="985" y2="244.5" stroke="#fff" stroke-width="1"/>
<text x="988.7" y="247" fill="#fff" text-anchor="start" textLength="26.6" lengthAdjust="spacingAndGlyphs">1.2865</text>
<line x1="5" y1="277.5" x2="982" y2="277.5" stroke="#86a0b2" stroke-width="1" stroke-dasharray="3 3" stroke-dashoffset="5"/>
<line x1="983" y1="277.5" x2="985" y2="277.5" stroke="#fff" stroke-width="1"/>
<text x="988.7" y="280" fill="#fff" text-anchor="start" textLength="26.6" lengthAdjust="spacingAndGlyphs">1.2845</text>
<line x1="5" y1="310.5" x2="982" y2="310.5" stroke="#86a0b2" stroke-width="1" stroke-dasharray="3 3" stroke-dashoffset="5"/>
<line x1="983" y1="310.5" x2="985" y2="310.5" stroke="#fff" stroke-width="1"/>
<text x="988.7" y="313" fill="#fff" text-anchor="start" textLength="26.6" lengthAdjust="spacingAndGlyphs">1.2825</text>
<line x1="5" y1="342.5" x2="982" y2="342.5" stroke="#86a0b2" stroke-width="1" stroke-dasharray="3 3" stroke-dashoffset="5"/>
<line x1="983" y1="342.5" x2="985" y2="342.5" stroke="#fff" stroke-width="1"/>
<text x="988.7" y="345" fill="#fff" text-anchor="start" textLength="26.6" lengthAdjust="spacingAndGlyphs">1.2805</text>
<line x1="5" y1="375.5" x2="982" y2="375.5" stroke="#86a0b2" stroke-width="1" stroke-dasharray="3 3" stroke-dashoffset="5"/>
<line x1="983" y1="375.5" x2="985" y2="375.5" stroke="#fff" stroke-width="1"/>
<text x="988.7" y="378" fill="#fff" text-anchor="start" textLength="26.6" lengthAdjust="spacingAndGlyphs">1.2785</text>
<line x1="5" y1="407.5" x2="982" y2="407.5" stroke="#86a0b2" stroke-width="1" stroke-dasharray="3 3" stroke-dashoffset="5"/>
<line x1="983" y1="407.5" x2="985" y2="407.5" stroke="#fff" stroke-width="1"/>
<text x="988.7" y="410" fill="#fff" text-anchor="start" textLength="26.6" lengthAdjust="spacingAndGlyphs">1.2765</text>
<line x1="5" y1="440.5" x2="982" y2="440.5" stroke="#86a0b2" stroke-width="1" stroke-dasharray="3 3" stroke-dashoffset="5"/>
<line x1="983" y1="440.5" x2="985" y2="440.5" stroke="#fff" stroke-width="1"/>
<text x="988.7" y="443" fill="#fff" text-anchor="start" textLength="26.6" lengthAdjust="spacingAndGlyphs">1.2745</text>
<line x1="5" y1="473.5" x2="982" y2="473.5" stroke="#86a0b2" stroke-width="1" stroke-dasharray="3 3" stroke-dashoffset="5"/>
<line x1="983" y1="473.5" x2="985" y2="473.5" stroke="#fff" stroke-width="1"/>
<text x="988.7" y="476" fill="#fff" text-anchor="start" textLength="26.6" lengthAdjust="spacingAndGlyphs">1.2725</text>
<line x1="5" y1="505.5" x2="982" y2="505.5" stroke="#86a0b2" stroke-width="1" stroke-dasharray="3 3" stroke-dashoffset="5"/>
<line x1="983" y1="505.5" x2="985" y2="505.5" stroke="#fff" stroke-width="1"/>
<text x="988.7" y="508" fill="#fff" text-anchor="start" textLength="26.6" lengthAdjust="spacingAndGlyphs">1.2705</text>
<rect x="8" y="107" width="183" height="11" fill="#000"/>
<text x="8.7" y="116" fill="#fff" text-anchor="start" textLength="181.0" lengthAdjust="spacingAndGlyphs">EURUSD,H4&#160;&#160;1.2816 1.2819 1.2811 1.2814</text>
<line x1="5.5" y1="699" x2="5.5" y2="702" stroke="#fff"/>
<text x="4.7" y="710.6" fill="#fff" text-anchor="start" textLength="51.5" lengthAdjust="spacingAndGlyphs">15 Aug 2006</text>
<line x1="69.5" y1="699" x2="69.5" y2="702" stroke="#fff"/>
<text x="68.7" y="710.6" fill="#fff" text-anchor="start" textLength="54.0" lengthAdjust="spacingAndGlyphs">16 Aug 20:00</text>
<line x1="133.5" y1="699" x2="133.5" y2="702" stroke="#fff"/>
<text x="132.7" y="710.6" fill="#fff" text-anchor="start" textLength="54.0" lengthAdjust="spacingAndGlyphs">18 Aug 04:00</text>
<line x1="197.5" y1="699" x2="197.5" y2="702" stroke="#fff"/>
<text x="196.7" y="710.6" fill="#fff" text-anchor="start" textLength="54.0" lengthAdjust="spacingAndGlyphs">21 Aug 08:00</text>
<line x1="261.5" y1="699" x2="261.5" y2="702" stroke="#fff"/>
<text x="260.7" y="710.6" fill="#fff" text-anchor="start" textLength="54.0" lengthAdjust="spacingAndGlyphs">22 Aug 16:00</text>
<line x1="325.5" y1="699" x2="325.5" y2="702" stroke="#fff"/>
<text x="324.7" y="710.6" fill="#fff" text-anchor="start" textLength="54.0" lengthAdjust="spacingAndGlyphs">24 Aug 00:00</text>
<line x1="389.5" y1="699" x2="389.5" y2="702" stroke="#fff"/>
<text x="388.7" y="710.6" fill="#fff" text-anchor="start" textLength="54.0" lengthAdjust="spacingAndGlyphs">25 Aug 08:00</text>
<line x1="453.5" y1="699" x2="453.5" y2="702" stroke="#fff"/>
<text x="452.7" y="710.6" fill="#fff" text-anchor="start" textLength="54.0" lengthAdjust="spacingAndGlyphs">28 Aug 12:00</text>
<line x1="517.5" y1="699" x2="517.5" y2="702" stroke="#fff"/>
<text x="516.7" y="710.6" fill="#fff" text-anchor="start" textLength="54.0" lengthAdjust="spacingAndGlyphs">29 Aug 20:00</text>
<line x1="581.5" y1="699" x2="581.5" y2="702" stroke="#fff"/>
<text x="580.7" y="710.6" fill="#fff" text-anchor="start" textLength="54.0" lengthAdjust="spacingAndGlyphs">31 Aug 04:00</text>
<line x1="645.5" y1="699" x2="645.5" y2="702" stroke="#fff"/>
<text x="644.7" y="710.6" fill="#fff" text-anchor="start" textLength="49.4" lengthAdjust="spacingAndGlyphs">1 Sep 12:00</text>
<line x1="709.5" y1="699" x2="709.5" y2="702" stroke="#fff"/>
<text x="708.7" y="710.6" fill="#fff" text-anchor="start" textLength="49.4" lengthAdjust="spacingAndGlyphs">4 Sep 16:00</text>
<line x1="773.5" y1="699" x2="773.5" y2="702" stroke="#fff"/>
<text x="772.7" y="710.6" fill="#fff" text-anchor="start" textLength="49.4" lengthAdjust="spacingAndGlyphs">6 Sep 00:00</text>
<g stroke="#ff0000" fill="none">
<line x1="5" y1="177.8" x2="982" y2="229"/>
<line x1="5" y1="188.2" x2="982" y2="246.5"/>
<line x1="5" y1="507" x2="484" y2="106.5"/>
<line x1="5" y1="513.5" x2="961" y2="105.5"/>
</g>
<line x1="5" y1="198.5" x2="982" y2="198.5" stroke="#ffff00" stroke-width="1"/>
<rect x="962" y="188" width="19" height="9" fill="#000"/>
<text x="980.5" y="195.6" fill="#fff" text-anchor="end" font-size="9.2" textLength="16.5" lengthAdjust="spacingAndGlyphs">61.8</text>
<line x1="5" y1="327.5" x2="982" y2="327.5" stroke="#8494a8" stroke-width="1"/>
<line x1="5.5" y1="345" x2="5.5" y2="359" stroke="#00ff00"/>
<path d="M5 358.5H7.5V487.5H5" fill="none" stroke="#00ff00"/>
<line x1="5.5" y1="487" x2="5.5" y2="497" stroke="#00ff00"/>
<line x1="13.5" y1="350" x2="13.5" y2="392" stroke="#00ff00"/>
<rect x="11.5" y="357.5" width="4" height="17" fill="#fff" stroke="#00ff00"/>
<line x1="21.5" y1="367" x2="21.5" y2="385" stroke="#00ff00"/>
<line x1="19" y1="376.5" x2="24" y2="376.5" stroke="#00ff00" stroke-width="1"/>
<line x1="29.5" y1="365" x2="29.5" y2="387" stroke="#00ff00"/>
<rect x="27.5" y="373.5" width="4" height="8" fill="#000" stroke="#00ff00"/>
<line x1="37.5" y1="362" x2="37.5" y2="384" stroke="#00ff00"/>
<rect x="35.5" y="368.5" width="4" height="4" fill="#000" stroke="#00ff00"/>
<line x1="45.5" y1="360" x2="45.5" y2="384" stroke="#00ff00"/>
<rect x="43.5" y="370.5" width="4" height="3" fill="#fff" stroke="#00ff00"/>
<line x1="53.5" y1="249" x2="53.5" y2="402" stroke="#00ff00"/>
<rect x="51.5" y="269.5" width="4" height="103" fill="#000" stroke="#00ff00"/>
<line x1="61.5" y1="249" x2="61.5" y2="288" stroke="#00ff00"/>
<rect x="59.5" y="270.5" width="4" height="10" fill="#fff" stroke="#00ff00"/>
<line x1="69.5" y1="264" x2="69.5" y2="298" stroke="#00ff00"/>
<rect x="67.5" y="275.5" width="4" height="8" fill="#fff" stroke="#00ff00"/>
<line x1="77.5" y1="252" x2="77.5" y2="292" stroke="#00ff00"/>
<rect x="75.5" y="261.5" width="4" height="19" fill="#000" stroke="#00ff00"/>
<line x1="85.5" y1="258" x2="85.5" y2="273" stroke="#00ff00"/>
<rect x="83.5" y="259.5" width="4" height="6" fill="#fff" stroke="#00ff00"/>
<line x1="93.5" y1="226" x2="93.5" y2="287" stroke="#00ff00"/>
<rect x="91.5" y="236.5" width="4" height="28" fill="#000" stroke="#00ff00"/>
<line x1="101.5" y1="212" x2="101.5" y2="257" stroke="#00ff00"/>
<rect x="99.5" y="238.5" width="4" height="6" fill="#fff" stroke="#00ff00"/>
<line x1="109.5" y1="231" x2="109.5" y2="327" stroke="#00ff00"/>
<rect x="107.5" y="241.5" width="4" height="82" fill="#fff" stroke="#00ff00"/>
<line x1="117.5" y1="295" x2="117.5" y2="332" stroke="#00ff00"/>
<rect x="115.5" y="309.5" width="4" height="15" fill="#000" stroke="#00ff00"/>
<line x1="125.5" y1="298" x2="125.5" y2="320" stroke="#00ff00"/>
<rect x="123.5" y="311.5" width="4" height="2" fill="#fff" stroke="#00ff00"/>
<line x1="133.5" y1="285" x2="133.5" y2="316" stroke="#00ff00"/>
<rect x="131.5" y="293.5" width="4" height="18" fill="#000" stroke="#00ff00"/>
<line x1="141.5" y1="280" x2="141.5" y2="316" stroke="#00ff00"/>
<rect x="139.5" y="292.5" width="4" height="18" fill="#fff" stroke="#00ff00"/>
<line x1="149.5" y1="278" x2="149.5" y2="383" stroke="#00ff00"/>
<rect x="147.5" y="290.5" width="4" height="23" fill="#000" stroke="#00ff00"/>
<line x1="157.5" y1="287" x2="157.5" y2="363" stroke="#00ff00"/>
<rect x="155.5" y="292.5" width="4" height="31" fill="#fff" stroke="#00ff00"/>
<line x1="165.5" y1="301" x2="165.5" y2="333" stroke="#00ff00"/>
<rect x="163.5" y="311.5" width="4" height="13" fill="#000" stroke="#00ff00"/>
<line x1="173.5" y1="305" x2="173.5" y2="315" stroke="#00ff00"/>
<rect x="171.5" y="307.5" width="4" height="4" fill="#fff" stroke="#00ff00"/>
<line x1="181.5" y1="220" x2="181.5" y2="312" stroke="#00ff00"/>
<rect x="179.5" y="228.5" width="4" height="81" fill="#000" stroke="#00ff00"/>
<line x1="189.5" y1="213" x2="189.5" y2="248" stroke="#00ff00"/>
<rect x="187.5" y="229.5" width="4" height="5" fill="#fff" stroke="#00ff00"/>
<line x1="197.5" y1="176" x2="197.5" y2="245" stroke="#00ff00"/>
<rect x="195.5" y="197.5" width="4" height="39" fill="#000" stroke="#00ff00"/>
<line x1="205.5" y1="141" x2="205.5" y2="224" stroke="#00ff00"/>
<rect x="203.5" y="143.5" width="4" height="54" fill="#000" stroke="#00ff00"/>
<line x1="213.5" y1="125" x2="213.5" y2="189" stroke="#00ff00"/>
<rect x="211.5" y="145.5" width="4" height="34" fill="#fff" stroke="#00ff00"/>
<line x1="221.5" y1="181" x2="221.5" y2="216" stroke="#00ff00"/>
<rect x="219.5" y="181.5" width="4" height="32" fill="#fff" stroke="#00ff00"/>
<line x1="229.5" y1="211" x2="229.5" y2="263" stroke="#00ff00"/>
<rect x="227.5" y="211.5" width="4" height="35" fill="#fff" stroke="#00ff00"/>
<line x1="237.5" y1="230" x2="237.5" y2="266" stroke="#00ff00"/>
<rect x="235.5" y="239.5" width="4" height="6" fill="#000" stroke="#00ff00"/>
<line x1="245.5" y1="213" x2="245.5" y2="291" stroke="#00ff00"/>
<rect x="243.5" y="243.5" width="4" height="45" fill="#fff" stroke="#00ff00"/>
<line x1="253.5" y1="271" x2="253.5" y2="356" stroke="#00ff00"/>
<rect x="251.5" y="292.5" width="4" height="50" fill="#fff" stroke="#00ff00"/>
<line x1="261.5" y1="320" x2="261.5" y2="378" stroke="#00ff00"/>
<rect x="259.5" y="344.5" width="4" height="31" fill="#fff" stroke="#00ff00"/>
<line x1="269.5" y1="336" x2="269.5" y2="380" stroke="#00ff00"/>
<rect x="267.5" y="344.5" width="4" height="29" fill="#000" stroke="#00ff00"/>
<line x1="277.5" y1="331" x2="277.5" y2="373" stroke="#00ff00"/>
<rect x="275.5" y="342.5" width="4" height="20" fill="#fff" stroke="#00ff00"/>
<line x1="285.5" y1="357" x2="285.5" y2="379" stroke="#00ff00"/>
<rect x="283.5" y="362.5" width="4" height="5" fill="#fff" stroke="#00ff00"/>
<line x1="293.5" y1="297" x2="293.5" y2="371" stroke="#00ff00"/>
<rect x="291.5" y="324.5" width="4" height="41" fill="#000" stroke="#00ff00"/>
<line x1="301.5" y1="295" x2="301.5" y2="346" stroke="#00ff00"/>
<rect x="299.5" y="297.5" width="4" height="29" fill="#000" stroke="#00ff00"/>
<line x1="309.5" y1="265" x2="309.5" y2="395" stroke="#00ff00"/>
<rect x="307.5" y="296.5" width="4" height="85" fill="#fff" stroke="#00ff00"/>
<line x1="317.5" y1="354" x2="317.5" y2="383" stroke="#00ff00"/>
<rect x="315.5" y="373.5" width="4" height="6" fill="#000" stroke="#00ff00"/>
<line x1="325.5" y1="371" x2="325.5" y2="426" stroke="#00ff00"/>
<rect x="323.5" y="372.5" width="4" height="35" fill="#fff" stroke="#00ff00"/>
<line x1="333.5" y1="383" x2="333.5" y2="423" stroke="#00ff00"/>
<rect x="331.5" y="396.5" width="4" height="13" fill="#000" stroke="#00ff00"/>
<line x1="341.5" y1="290" x2="341.5" y2="433" stroke="#00ff00"/>
<rect x="339.5" y="314.5" width="4" height="84" fill="#000" stroke="#00ff00"/>
<line x1="349.5" y1="282" x2="349.5" y2="338" stroke="#00ff00"/>
<rect x="347.5" y="313.5" width="4" height="3" fill="#fff" stroke="#00ff00"/>
<line x1="357.5" y1="300" x2="357.5" y2="425" stroke="#00ff00"/>
<rect x="355.5" y="314.5" width="4" height="95" fill="#fff" stroke="#00ff00"/>
<line x1="365.5" y1="401" x2="365.5" y2="430" stroke="#00ff00"/>
<rect x="363.5" y="408.5" width="4" height="3" fill="#000" stroke="#00ff00"/>
<line x1="373.5" y1="401" x2="373.5" y2="443" stroke="#00ff00"/>
<rect x="371.5" y="407.5" width="4" height="4" fill="#000" stroke="#00ff00"/>
<line x1="381.5" y1="381" x2="381.5" y2="412" stroke="#00ff00"/>
<rect x="379.5" y="407.5" width="4" height="4" fill="#000" stroke="#00ff00"/>
<line x1="389.5" y1="386" x2="389.5" y2="441" stroke="#00ff00"/>
<rect x="387.5" y="404.5" width="4" height="3" fill="#000" stroke="#00ff00"/>
<line x1="397.5" y1="391" x2="397.5" y2="430" stroke="#00ff00"/>
<rect x="395.5" y="407.5" width="4" height="13" fill="#fff" stroke="#00ff00"/>
<line x1="405.5" y1="381" x2="405.5" y2="475" stroke="#00ff00"/>
<rect x="403.5" y="419.5" width="4" height="3" fill="#fff" stroke="#00ff00"/>
<line x1="413.5" y1="411" x2="413.5" y2="426" stroke="#00ff00"/>
<line x1="411" y1="421.5" x2="416" y2="421.5" stroke="#00ff00" stroke-width="1"/>
<line x1="421.5" y1="402" x2="421.5" y2="422" stroke="#00ff00"/>
<rect x="419.5" y="411.5" width="4" height="8" fill="#fff" stroke="#00ff00"/>
<line x1="429.5" y1="388" x2="429.5" y2="426" stroke="#00ff00"/>
<rect x="427.5" y="395.5" width="4" height="27" fill="#000" stroke="#00ff00"/>
<line x1="437.5" y1="344" x2="437.5" y2="403" stroke="#00ff00"/>
<rect x="435.5" y="362.5" width="4" height="37" fill="#000" stroke="#00ff00"/>
<line x1="445.5" y1="326" x2="445.5" y2="374" stroke="#00ff00"/>
<rect x="443.5" y="331.5" width="4" height="29" fill="#000" stroke="#00ff00"/>
<line x1="453.5" y1="318" x2="453.5" y2="361" stroke="#00ff00"/>
<rect x="451.5" y="332.5" width="4" height="4" fill="#fff" stroke="#00ff00"/>
<line x1="461.5" y1="324" x2="461.5" y2="387" stroke="#00ff00"/>
<rect x="459.5" y="339.5" width="4" height="25" fill="#fff" stroke="#00ff00"/>
<line x1="469.5" y1="361" x2="469.5" y2="395" stroke="#00ff00"/>
<rect x="467.5" y="363.5" width="4" height="13" fill="#fff" stroke="#00ff00"/>
<line x1="477.5" y1="322" x2="477.5" y2="384" stroke="#00ff00"/>
<rect x="475.5" y="326.5" width="4" height="54" fill="#000" stroke="#00ff00"/>
<line x1="485.5" y1="297" x2="485.5" y2="336" stroke="#00ff00"/>
<rect x="483.5" y="318.5" width="4" height="6" fill="#000" stroke="#00ff00"/>
<line x1="493.5" y1="288" x2="493.5" y2="345" stroke="#00ff00"/>
<rect x="491.5" y="319.5" width="4" height="20" fill="#fff" stroke="#00ff00"/>
<line x1="501.5" y1="322" x2="501.5" y2="368" stroke="#00ff00"/>
<rect x="499.5" y="342.5" width="4" height="16" fill="#fff" stroke="#00ff00"/>
<line x1="509.5" y1="331" x2="509.5" y2="436" stroke="#00ff00"/>
<rect x="507.5" y="360.5" width="4" height="47" fill="#fff" stroke="#00ff00"/>
<line x1="517.5" y1="290" x2="517.5" y2="427" stroke="#00ff00"/>
<rect x="515.5" y="305.5" width="4" height="99" fill="#000" stroke="#00ff00"/>
<line x1="525.5" y1="264" x2="525.5" y2="315" stroke="#00ff00"/>
<rect x="523.5" y="301.5" width="4" height="2" fill="#000" stroke="#00ff00"/>
<line x1="533.5" y1="280" x2="533.5" y2="319" stroke="#00ff00"/>
<rect x="531.5" y="295.5" width="4" height="10" fill="#000" stroke="#00ff00"/>
<line x1="541.5" y1="285" x2="541.5" y2="326" stroke="#00ff00"/>
<rect x="539.5" y="293.5" width="4" height="28" fill="#fff" stroke="#00ff00"/>
<line x1="549.5" y1="282" x2="549.5" y2="336" stroke="#00ff00"/>
<rect x="547.5" y="303.5" width="4" height="16" fill="#000" stroke="#00ff00"/>
<line x1="557.5" y1="287" x2="557.5" y2="327" stroke="#00ff00"/>
<rect x="555.5" y="305.5" width="4" height="3" fill="#fff" stroke="#00ff00"/>
<line x1="565.5" y1="288" x2="565.5" y2="312" stroke="#00ff00"/>
<rect x="563.5" y="292.5" width="4" height="19" fill="#000" stroke="#00ff00"/>
<line x1="573.5" y1="282" x2="573.5" y2="312" stroke="#00ff00"/>
<rect x="571.5" y="293.5" width="4" height="10" fill="#fff" stroke="#00ff00"/>
<line x1="581.5" y1="296" x2="581.5" y2="325" stroke="#00ff00"/>
<rect x="579.5" y="301.5" width="4" height="8" fill="#fff" stroke="#00ff00"/>
<line x1="589.5" y1="251" x2="589.5" y2="314" stroke="#00ff00"/>
<rect x="587.5" y="275.5" width="4" height="36" fill="#000" stroke="#00ff00"/>
<line x1="597.5" y1="224" x2="597.5" y2="302" stroke="#00ff00"/>
<rect x="595.5" y="274.5" width="4" height="19" fill="#fff" stroke="#00ff00"/>
<line x1="605.5" y1="293" x2="605.5" y2="378" stroke="#00ff00"/>
<rect x="603.5" y="295.5" width="4" height="62" fill="#fff" stroke="#00ff00"/>
<line x1="613.5" y1="324" x2="613.5" y2="365" stroke="#00ff00"/>
<rect x="611.5" y="344.5" width="4" height="14" fill="#000" stroke="#00ff00"/>
<line x1="621.5" y1="327" x2="621.5" y2="353" stroke="#00ff00"/>
<rect x="619.5" y="342.5" width="4" height="3" fill="#fff" stroke="#00ff00"/>
<line x1="629.5" y1="325" x2="629.5" y2="360" stroke="#00ff00"/>
<rect x="627.5" y="331.5" width="4" height="18" fill="#000" stroke="#00ff00"/>
<line x1="637.5" y1="314" x2="637.5" y2="355" stroke="#00ff00"/>
<line x1="635" y1="326.5" x2="640" y2="326.5" stroke="#00ff00" stroke-width="1"/>
<line x1="645.5" y1="304" x2="645.5" y2="427" stroke="#00ff00"/>
<rect x="643.5" y="327.5" width="4" height="74" fill="#fff" stroke="#00ff00"/>
<line x1="653.5" y1="277" x2="653.5" y2="405" stroke="#00ff00"/>
<rect x="651.5" y="298.5" width="4" height="105" fill="#000" stroke="#00ff00"/>
<line x1="661.5" y1="279" x2="661.5" y2="308" stroke="#00ff00"/>
<rect x="659.5" y="287.5" width="4" height="14" fill="#000" stroke="#00ff00"/>
<line x1="669.5" y1="277" x2="669.5" y2="293" stroke="#00ff00"/>
<rect x="667.5" y="280.5" width="4" height="3" fill="#000" stroke="#00ff00"/>
<line x1="677.5" y1="238" x2="677.5" y2="290" stroke="#00ff00"/>
<rect x="675.5" y="261.5" width="4" height="17" fill="#000" stroke="#00ff00"/>
<line x1="685.5" y1="241" x2="685.5" y2="266" stroke="#00ff00"/>
<rect x="683.5" y="259.5" width="4" height="3" fill="#000" stroke="#00ff00"/>
<line x1="693.5" y1="254" x2="693.5" y2="290" stroke="#00ff00"/>
<line x1="691" y1="258.5" x2="696" y2="258.5" stroke="#00ff00" stroke-width="1"/>
<line x1="701.5" y1="239" x2="701.5" y2="271" stroke="#00ff00"/>
<rect x="699.5" y="251.5" width="4" height="5" fill="#000" stroke="#00ff00"/>
<line x1="709.5" y1="236" x2="709.5" y2="271" stroke="#00ff00"/>
<line x1="707" y1="249.5" x2="712" y2="249.5" stroke="#00ff00" stroke-width="1"/>
<line x1="717.5" y1="230" x2="717.5" y2="258" stroke="#00ff00"/>
<rect x="715.5" y="246.5" width="4" height="6" fill="#fff" stroke="#00ff00"/>
<line x1="725.5" y1="249" x2="725.5" y2="296" stroke="#00ff00"/>
<rect x="723.5" y="254.5" width="4" height="23" fill="#fff" stroke="#00ff00"/>
<line x1="733.5" y1="273" x2="733.5" y2="306" stroke="#00ff00"/>
<rect x="731.5" y="274.5" width="4" height="22" fill="#fff" stroke="#00ff00"/>
<line x1="741.5" y1="275" x2="741.5" y2="321" stroke="#00ff00"/>
<rect x="739.5" y="288.5" width="4" height="10" fill="#000" stroke="#00ff00"/>
<line x1="749.5" y1="286" x2="749.5" y2="359" stroke="#00ff00"/>
<rect x="747.5" y="287.5" width="4" height="47" fill="#fff" stroke="#00ff00"/>
<line x1="757.5" y1="323" x2="757.5" y2="362" stroke="#00ff00"/>
<rect x="755" y="336" width="5" height="2" fill="#00ff00"/>
<line x1="765.5" y1="317" x2="765.5" y2="346" stroke="#00ff00"/>
<rect x="763.5" y="324.5" width="4" height="12" fill="#000" stroke="#00ff00"/>
<line x1="773.5" y1="309" x2="773.5" y2="341" stroke="#00ff00"/>
<line x1="771" y1="323.5" x2="776" y2="323.5" stroke="#00ff00" stroke-width="1"/>
<line x1="781.5" y1="319" x2="781.5" y2="333" stroke="#00ff00"/>
<rect x="779.5" y="324.5" width="4" height="3" fill="#fff" stroke="#00ff00"/>
<polyline points="5.5,377.5 9.5,378.5 14.5,379.5 20.5,378.5 26.5,379.5 31.5,381.5 37.5,385.0 50.5,390.5 62.5,393.0 75.5,395.0 85.5,395.5 93.5,393.5 101.5,389.5 109.5,386.5 117.5,384.5 125.5,381.5 133.5,378.0 149.5,368.5 165.5,357.5 181.5,346.5 197.5,329.5 213.5,309.5 229.5,290.5 237.5,284.0 245.5,282.5 253.5,281.5 261.5,280.5 269.5,280.5 277.5,279.5 285.5,279.0 293.5,280.5 301.5,283.0 309.5,285.5 317.5,290.5 325.5,296.0 333.5,300.0 341.5,301.5 349.5,302.5 357.5,305.5 365.5,310.0 373.5,313.5 381.5,316.5 389.5,320.0 397.5,323.5 405.5,326.5 413.5,330.5 421.5,335.0 429.5,340.5 437.5,346.5 445.5,353.0 453.5,359.5 461.5,364.5 469.5,367.5 477.5,370.0 485.5,371.5 493.5,371.5 501.5,370.5 509.5,371.5 517.5,370.5 525.5,368.5 533.5,367.5 541.5,368.0 549.5,365.0 557.5,361.5 565.5,358.5 573.5,356.5 581.5,355.5 589.5,353.5 597.5,351.5 605.5,349.5 613.5,347.5 621.5,345.5 629.5,343.0 637.5,340.0 645.5,338.0 653.5,334.5 661.5,329.5 669.5,325.5 677.5,322.5 685.5,320.5 693.5,316.5 701.5,313.0 709.5,310.0 717.5,307.5 725.5,306.0 733.5,304.5 741.5,302.5 749.5,301.0 757.5,301.5 765.5,302.5 773.5,303.5 781.5,303.5" fill="none" stroke="#f018f0" stroke-width="1"/>
<polyline points="5.5,460.0 13.0,450.5 21.5,440.5 29.5,435.5 37.5,429.5 45.5,423.0 53.5,408.0 61.5,389.5 69.5,371.5 77.5,353.0 85.5,335.5 93.5,318.0 101.5,308.0 109.5,303.5 117.5,300.5 125.5,295.5 133.5,288.5 141.5,282.5 149.5,284.5 157.5,286.5 165.5,290.5 173.5,295.0 181.5,291.5 189.5,291.0 197.5,285.5 205.5,270.0 213.5,259.5 221.5,252.5 229.5,248.5 237.5,244.0 245.5,243.5 253.5,245.5 257.5,246.5 261.5,250.5 269.5,255.0 277.5,265.0 285.5,276.5 293.5,286.5 301.5,298.0 309.5,313.0 317.5,329.5 325.5,344.5 333.5,355.0 341.5,357.5 349.5,354.5 357.5,358.5 365.5,364.5 373.5,368.0 381.5,371.5 389.5,378.0 397.5,386.5 405.5,391.5 413.5,394.5 421.5,396.5 429.5,394.5 437.5,398.5 445.5,401.5 453.5,395.5 461.5,391.5 469.5,388.0 477.5,381.5 485.5,374.5 493.5,367.5 501.5,362.5 509.5,360.5 517.5,350.5 525.5,343.0 533.5,338.0 541.5,337.5 549.5,335.5 557.5,329.5 565.5,323.5 573.5,321.5 581.5,319.5 589.5,313.5 597.5,308.5 605.5,306.5 613.5,309.5 621.5,311.5 629.5,314.5 637.5,316.5 645.5,324.5 653.5,323.5 661.5,323.0 669.5,320.5 677.5,317.5 685.5,315.5 693.5,311.5 701.5,301.5 709.5,293.5 717.5,286.5 725.5,282.5 733.5,280.0 741.5,272.0 749.5,274.5 757.5,278.0 765.5,282.5 773.5,288.0 781.5,293.0" fill="none" stroke="#10e0f0" stroke-width="1"/>
<polyline points="5.5,451.5 10.5,438.0 15.5,423.0 21.5,408.0 29.5,393.0 33.0,385.5 37.5,370.5 45.5,373.0 53.5,350.5 61.5,325.5 69.5,308.0 77.5,288.0 85.5,271.5 93.5,264.5 101.5,258.5 109.5,266.5 117.5,278.0 125.5,288.0 133.5,296.5 141.5,310.5 149.5,303.5 157.5,306.5 165.5,307.5 173.5,309.5 181.5,291.5 189.5,275.5 197.5,250.5 205.5,216.5 213.5,197.5 221.5,193.5 229.5,197.0 237.5,205.0 245.5,232.5 253.5,270.5 257.5,280.5 261.5,295.5 269.5,325.5 277.5,345.5 285.5,358.5 293.5,354.5 301.5,339.5 309.5,347.5 317.5,348.5 325.5,358.0 333.5,369.5 341.5,374.5 349.5,361.0 357.5,369.5 365.5,369.5 373.5,371.5 381.5,388.0 389.5,405.5 397.5,410.5 405.5,413.5 413.5,416.5 421.5,418.0 429.5,416.5 437.5,403.0 445.5,387.5 453.5,370.5 461.5,358.0 469.5,353.0 477.5,346.5 485.5,344.5 493.5,345.5 501.5,343.5 509.5,350.5 517.5,345.5 525.5,340.5 533.5,333.0 541.5,325.5 549.5,305.5 557.5,306.5 565.5,305.0 573.5,304.5 581.5,302.5 589.5,296.5 597.5,295.0 605.5,308.0 613.5,316.5 621.5,323.5 629.5,333.0 637.5,340.5 645.5,349.5 653.5,338.5 661.5,329.5 669.5,318.0 677.5,303.0 685.5,280.5 693.5,270.5 701.5,262.5 709.5,256.5 717.5,254.5 725.5,258.0 733.5,265.5 741.5,275.5 749.5,288.0 757.5,308.0 765.5,318.0 773.5,323.0 781.5,329.5" fill="none" stroke="#ff0000" stroke-width="1"/>
<path d="M28 513.5H31M29.5 512V515" stroke="#00ff00"/><rect x="29" y="513" width="1" height="1" fill="#fff"/>
<path d="M36 509.5H39M37.5 508V511" stroke="#00ff00"/><rect x="37" y="509" width="1" height="1" fill="#fff"/>
<path d="M44 506.5H47M45.5 505V508" stroke="#00ff00"/><rect x="45" y="506" width="1" height="1" fill="#fff"/>
<path d="M52 503.5H55M53.5 502V505" stroke="#00ff00"/><rect x="53" y="503" width="1" height="1" fill="#fff"/>
<path d="M60 493.5H63M61.5 492V495" stroke="#00ff00"/><rect x="61" y="493" width="1" height="1" fill="#fff"/>
<path d="M68 483.5H71M69.5 482V485" stroke="#00ff00"/><rect x="69" y="483" width="1" height="1" fill="#fff"/>
<path d="M76 474.5H79M77.5 473V476" stroke="#00ff00"/><rect x="77" y="474" width="1" height="1" fill="#fff"/>
<path d="M84 465.5H87M85.5 464V467" stroke="#00ff00"/><rect x="85" y="465" width="1" height="1" fill="#fff"/>
<path d="M92 456.5H95M93.5 455V458" stroke="#00ff00"/><rect x="93" y="456" width="1" height="1" fill="#fff"/>
<path d="M100 442.5H103M101.5 441V444" stroke="#00ff00"/><rect x="101" y="442" width="1" height="1" fill="#fff"/>
<path d="M108 424.5H111M109.5 423V426" stroke="#00ff00"/><rect x="109" y="424" width="1" height="1" fill="#fff"/>
<path d="M116 407.5H119M117.5 406V409" stroke="#00ff00"/><rect x="117" y="407" width="1" height="1" fill="#fff"/>
<path d="M124 391.5H127M125.5 390V393" stroke="#00ff00"/><rect x="125" y="391" width="1" height="1" fill="#fff"/>
<path d="M132 377.5H135M133.5 376V379" stroke="#00ff00"/><rect x="133" y="377" width="1" height="1" fill="#fff"/>
<path d="M140 364.5H143M141.5 363V366" stroke="#00ff00"/><rect x="141" y="364" width="1" height="1" fill="#fff"/>
<path d="M148 212.5H151M149.5 211V214" stroke="#00ff00"/><rect x="149" y="212" width="1" height="1" fill="#fff"/>
<path d="M156 215.5H159M157.5 214V217" stroke="#00ff00"/><rect x="157" y="215" width="1" height="1" fill="#fff"/>
<path d="M164 219.5H167M165.5 218V221" stroke="#00ff00"/><rect x="165" y="219" width="1" height="1" fill="#fff"/>
<path d="M172 222.5H175M173.5 221V224" stroke="#00ff00"/><rect x="173" y="222" width="1" height="1" fill="#fff"/>
<path d="M180 383.5H183M181.5 382V385" stroke="#00ff00"/><rect x="181" y="383" width="1" height="1" fill="#fff"/>
<path d="M188 380.5H191M189.5 379V382" stroke="#00ff00"/><rect x="189" y="380" width="1" height="1" fill="#fff"/>
<path d="M196 373.5H199M197.5 372V375" stroke="#00ff00"/><rect x="197" y="373" width="1" height="1" fill="#fff"/>
<path d="M204 361.5H207M205.5 360V363" stroke="#00ff00"/><rect x="205" y="361" width="1" height="1" fill="#fff"/>
<path d="M212 344.5H215M213.5 343V346" stroke="#00ff00"/><rect x="213" y="344" width="1" height="1" fill="#fff"/>
<path d="M220 322.5H223M221.5 321V324" stroke="#00ff00"/><rect x="221" y="322" width="1" height="1" fill="#fff"/>
<path d="M228 302.5H231M229.5 301V304" stroke="#00ff00"/><rect x="229" y="302" width="1" height="1" fill="#fff"/>
<path d="M236 284.5H239M237.5 283V286" stroke="#00ff00"/><rect x="237" y="284" width="1" height="1" fill="#fff"/>
<path d="M244 125.5H247M245.5 124V127" stroke="#00ff00"/><rect x="245" y="125" width="1" height="1" fill="#fff"/>
<path d="M252 128.5H255M253.5 127V130" stroke="#00ff00"/><rect x="253" y="128" width="1" height="1" fill="#fff"/>
<path d="M260 137.5H263M261.5 136V139" stroke="#00ff00"/><rect x="261" y="137" width="1" height="1" fill="#fff"/>
<path d="M268 152.5H271M269.5 151V154" stroke="#00ff00"/><rect x="269" y="152" width="1" height="1" fill="#fff"/>
<path d="M276 170.5H279M277.5 169V172" stroke="#00ff00"/><rect x="277" y="170" width="1" height="1" fill="#fff"/>
<path d="M284 187.5H287M285.5 186V189" stroke="#00ff00"/><rect x="285" y="187" width="1" height="1" fill="#fff"/>
<path d="M292 202.5H295M293.5 201V204" stroke="#00ff00"/><rect x="293" y="202" width="1" height="1" fill="#fff"/>
<path d="M300 216.5H303M301.5 215V218" stroke="#00ff00"/><rect x="301" y="216" width="1" height="1" fill="#fff"/>
<path d="M308 229.5H311M309.5 228V231" stroke="#00ff00"/><rect x="309" y="229" width="1" height="1" fill="#fff"/>
<path d="M316 245.5H319M317.5 244V247" stroke="#00ff00"/><rect x="317" y="245" width="1" height="1" fill="#fff"/>
<path d="M324 260.5H327M325.5 259V262" stroke="#00ff00"/><rect x="325" y="260" width="1" height="1" fill="#fff"/>
<path d="M332 279.5H335M333.5 278V281" stroke="#00ff00"/><rect x="333" y="279" width="1" height="1" fill="#fff"/>
<path d="M348 432.5H351M349.5 431V434" stroke="#00ff00"/><rect x="349" y="432" width="1" height="1" fill="#fff"/>
<path d="M356 432.5H359M357.5 431V434" stroke="#00ff00"/><rect x="357" y="432" width="1" height="1" fill="#fff"/>
<path d="M364 282.5H367M365.5 281V284" stroke="#00ff00"/><rect x="365" y="282" width="1" height="1" fill="#fff"/>
<path d="M372 285.5H375M373.5 284V287" stroke="#00ff00"/><rect x="373" y="285" width="1" height="1" fill="#fff"/>
<path d="M380 291.5H383M381.5 290V293" stroke="#00ff00"/><rect x="381" y="291" width="1" height="1" fill="#fff"/>
<path d="M388 297.5H391M389.5 296V299" stroke="#00ff00"/><rect x="389" y="297" width="1" height="1" fill="#fff"/>
<path d="M396 303.5H399M397.5 302V305" stroke="#00ff00"/><rect x="397" y="303" width="1" height="1" fill="#fff"/>
<path d="M404 308.5H407M405.5 307V310" stroke="#00ff00"/><rect x="405" y="308" width="1" height="1" fill="#fff"/>
<path d="M412 318.5H415M413.5 317V320" stroke="#00ff00"/><rect x="413" y="318" width="1" height="1" fill="#fff"/>
<path d="M420 328.5H423M421.5 327V330" stroke="#00ff00"/><rect x="421" y="328" width="1" height="1" fill="#fff"/>
<path d="M428 336.5H431M429.5 335V338" stroke="#00ff00"/><rect x="429" y="336" width="1" height="1" fill="#fff"/>
<path d="M444 474.5H447M445.5 473V476" stroke="#00ff00"/><rect x="445" y="474" width="1" height="1" fill="#fff"/>
<path d="M452 471.5H455M453.5 470V473" stroke="#00ff00"/><rect x="453" y="471" width="1" height="1" fill="#fff"/>
<path d="M460 465.5H463M461.5 464V467" stroke="#00ff00"/><rect x="461" y="465" width="1" height="1" fill="#fff"/>
<path d="M468 459.5H471M469.5 458V461" stroke="#00ff00"/><rect x="469" y="459" width="1" height="1" fill="#fff"/>
<path d="M476 454.5H479M477.5 453V456" stroke="#00ff00"/><rect x="477" y="454" width="1" height="1" fill="#fff"/>
<path d="M484 448.5H487M485.5 447V450" stroke="#00ff00"/><rect x="485" y="448" width="1" height="1" fill="#fff"/>
<path d="M492 439.5H495M493.5 438V441" stroke="#00ff00"/><rect x="493" y="439" width="1" height="1" fill="#fff"/>
<path d="M500 427.5H503M501.5 426V429" stroke="#00ff00"/><rect x="501" y="427" width="1" height="1" fill="#fff"/>
<path d="M508 288.5H511M509.5 287V290" stroke="#00ff00"/><rect x="509" y="288" width="1" height="1" fill="#fff"/>
<path d="M516 291.5H519M517.5 290V293" stroke="#00ff00"/><rect x="517" y="291" width="1" height="1" fill="#fff"/>
<path d="M524 435.5H527M525.5 434V437" stroke="#00ff00"/><rect x="525" y="435" width="1" height="1" fill="#fff"/>
<path d="M532 432.5H535M533.5 431V434" stroke="#00ff00"/><rect x="533" y="432" width="1" height="1" fill="#fff"/>
<path d="M540 428.5H543M541.5 427V430" stroke="#00ff00"/><rect x="541" y="428" width="1" height="1" fill="#fff"/>
<path d="M548 425.5H551M549.5 424V427" stroke="#00ff00"/><rect x="549" y="425" width="1" height="1" fill="#fff"/>
<path d="M556 422.5H559M557.5 421V424" stroke="#00ff00"/><rect x="557" y="422" width="1" height="1" fill="#fff"/>
<path d="M564 419.5H567M565.5 418V421" stroke="#00ff00"/><rect x="565" y="419" width="1" height="1" fill="#fff"/>
<path d="M572 416.5H575M573.5 415V418" stroke="#00ff00"/><rect x="573" y="416" width="1" height="1" fill="#fff"/>
<path d="M580 413.5H583M581.5 412V415" stroke="#00ff00"/><rect x="581" y="413" width="1" height="1" fill="#fff"/>
<path d="M588 410.5H591M589.5 409V412" stroke="#00ff00"/><rect x="589" y="410" width="1" height="1" fill="#fff"/>
<path d="M596 403.5H599M597.5 402V405" stroke="#00ff00"/><rect x="597" y="403" width="1" height="1" fill="#fff"/>
<path d="M604 392.5H607M605.5 391V394" stroke="#00ff00"/><rect x="605" y="392" width="1" height="1" fill="#fff"/>
<path d="M612 382.5H615M613.5 381V384" stroke="#00ff00"/><rect x="613" y="382" width="1" height="1" fill="#fff"/>
<path d="M620 376.5H623M621.5 375V378" stroke="#00ff00"/><rect x="621" y="376" width="1" height="1" fill="#fff"/>
<path d="M628 367.5H631M629.5 366V369" stroke="#00ff00"/><rect x="629" y="367" width="1" height="1" fill="#fff"/>
<path d="M636 360.5H639M637.5 359V362" stroke="#00ff00"/><rect x="637" y="360" width="1" height="1" fill="#fff"/>
<path d="M644 224.5H647M645.5 223V226" stroke="#00ff00"/><rect x="645" y="224" width="1" height="1" fill="#fff"/>
<path d="M652 227.5H655M653.5 226V229" stroke="#00ff00"/><rect x="653" y="227" width="1" height="1" fill="#fff"/>
<path d="M660 231.5H663M661.5 230V233" stroke="#00ff00"/><rect x="661" y="231" width="1" height="1" fill="#fff"/>
<path d="M668 235.5H671M669.5 234V237" stroke="#00ff00"/><rect x="669" y="235" width="1" height="1" fill="#fff"/>
<path d="M676 239.5H679M677.5 238V241" stroke="#00ff00"/><rect x="677" y="239" width="1" height="1" fill="#fff"/>
<path d="M684 242.5H687M685.5 241V244" stroke="#00ff00"/><rect x="685" y="242" width="1" height="1" fill="#fff"/>
<path d="M692 243.5H695M693.5 242V245" stroke="#00ff00"/><rect x="693" y="243" width="1" height="1" fill="#fff"/>
<path d="M700 425.5H703M701.5 424V427" stroke="#00ff00"/><rect x="701" y="425" width="1" height="1" fill="#fff"/>
<path d="M708 422.5H711M709.5 421V424" stroke="#00ff00"/><rect x="709" y="422" width="1" height="1" fill="#fff"/>
<path d="M716 414.5H719M717.5 413V416" stroke="#00ff00"/><rect x="717" y="414" width="1" height="1" fill="#fff"/>
<path d="M724 403.5H727M725.5 402V405" stroke="#00ff00"/><rect x="725" y="403" width="1" height="1" fill="#fff"/>
<path d="M732 393.5H735M733.5 392V395" stroke="#00ff00"/><rect x="733" y="393" width="1" height="1" fill="#fff"/>
<path d="M740 383.5H743M741.5 382V385" stroke="#00ff00"/><rect x="741" y="383" width="1" height="1" fill="#fff"/>
<path d="M748 374.5H751M749.5 373V376" stroke="#00ff00"/><rect x="749" y="374" width="1" height="1" fill="#fff"/>
<path d="M756 366.5H759M757.5 365V368" stroke="#00ff00"/><rect x="757" y="366" width="1" height="1" fill="#fff"/>
<path d="M764 360.5H767M765.5 359V362" stroke="#00ff00"/><rect x="765" y="360" width="1" height="1" fill="#fff"/>
<path d="M772 360.5H775M773.5 359V362" stroke="#00ff00"/><rect x="773" y="360" width="1" height="1" fill="#fff"/>
<path d="M780 352.5H783M781.5 351V354" stroke="#00ff00"/><rect x="781" y="352" width="1" height="1" fill="#fff"/>
<path d="M780 105H791L785.5 111Z" fill="#8090a0"/>
<rect x="985" y="321" width="34" height="12" fill="#fff"/>
<text x="988.7" y="330" fill="#000" text-anchor="start" textLength="26.6" lengthAdjust="spacingAndGlyphs">1.2814</text>
<text x="8.7" y="530" fill="#fff" text-anchor="start" textLength="140.2" lengthAdjust="spacingAndGlyphs">MACD(12,26,9) -0.00005 0.00065</text>
<line x1="5" y1="555.5" x2="982" y2="555.5" stroke="#86a0b2" stroke-width="1" stroke-dasharray="3 3" stroke-dashoffset="5"/>
<line x1="5.5" y1="555" x2="5.5" y2="580" stroke="#c8c8c8"/>
<line x1="13.5" y1="555" x2="13.5" y2="574" stroke="#c8c8c8"/>
<line x1="21.5" y1="555" x2="21.5" y2="569" stroke="#c8c8c8"/>
<line x1="29.5" y1="555" x2="29.5" y2="565" stroke="#c8c8c8"/>
<line x1="37.5" y1="555" x2="37.5" y2="562" stroke="#c8c8c8"/>
<line x1="45.5" y1="555" x2="45.5" y2="558" stroke="#c8c8c8"/>
<line x1="53.5" y1="551" x2="53.5" y2="556" stroke="#c8c8c8"/>
<line x1="61.5" y1="545" x2="61.5" y2="556" stroke="#c8c8c8"/>
<line x1="69.5" y1="539" x2="69.5" y2="556" stroke="#c8c8c8"/>
<line x1="77.5" y1="535" x2="77.5" y2="556" stroke="#c8c8c8"/>
<line x1="85.5" y1="531" x2="85.5" y2="556" stroke="#c8c8c8"/>
<line x1="93.5" y1="528" x2="93.5" y2="556" stroke="#c8c8c8"/>
<line x1="101.5" y1="527" x2="101.5" y2="556" stroke="#c8c8c8"/>
<line x1="109.5" y1="529" x2="109.5" y2="556" stroke="#c8c8c8"/>
<line x1="117.5" y1="531" x2="117.5" y2="556" stroke="#c8c8c8"/>
<line x1="125.5" y1="532" x2="125.5" y2="556" stroke="#c8c8c8"/>
<line x1="133.5" y1="533" x2="133.5" y2="556" stroke="#c8c8c8"/>
<line x1="141.5" y1="536" x2="141.5" y2="556" stroke="#c8c8c8"/>
<line x1="149.5" y1="537" x2="149.5" y2="556" stroke="#c8c8c8"/>
<line x1="157.5" y1="538" x2="157.5" y2="556" stroke="#c8c8c8"/>
<line x1="165.5" y1="540" x2="165.5" y2="556" stroke="#c8c8c8"/>
<line x1="173.5" y1="541" x2="173.5" y2="556" stroke="#c8c8c8"/>
<line x1="181.5" y1="537" x2="181.5" y2="556" stroke="#c8c8c8"/>
<line x1="189.5" y1="535" x2="189.5" y2="556" stroke="#c8c8c8"/>
<line x1="197.5" y1="529" x2="197.5" y2="556" stroke="#c8c8c8"/>
<line x1="205.5" y1="523" x2="205.5" y2="556" stroke="#c8c8c8"/>
<line x1="213.5" y1="521" x2="213.5" y2="556" stroke="#c8c8c8"/>
<line x1="221.5" y1="523" x2="221.5" y2="556" stroke="#c8c8c8"/>
<line x1="229.5" y1="525" x2="229.5" y2="556" stroke="#c8c8c8"/>
<line x1="237.5" y1="527" x2="237.5" y2="556" stroke="#c8c8c8"/>
<line x1="245.5" y1="533" x2="245.5" y2="556" stroke="#c8c8c8"/>
<line x1="253.5" y1="541" x2="253.5" y2="556" stroke="#c8c8c8"/>
<line x1="261.5" y1="548" x2="261.5" y2="556" stroke="#c8c8c8"/>
<line x1="269.5" y1="554" x2="269.5" y2="556" stroke="#c8c8c8"/>
<line x1="277.5" y1="555" x2="277.5" y2="558" stroke="#c8c8c8"/>
<line x1="285.5" y1="555" x2="285.5" y2="562" stroke="#c8c8c8"/>
<line x1="293.5" y1="555" x2="293.5" y2="563" stroke="#c8c8c8"/>
<line x1="301.5" y1="555" x2="301.5" y2="561" stroke="#c8c8c8"/>
<line x1="309.5" y1="555" x2="309.5" y2="565" stroke="#c8c8c8"/>
<line x1="317.5" y1="555" x2="317.5" y2="568" stroke="#c8c8c8"/>
<line x1="325.5" y1="555" x2="325.5" y2="572" stroke="#c8c8c8"/>
<line x1="333.5" y1="555" x2="333.5" y2="574" stroke="#c8c8c8"/>
<line x1="341.5" y1="555" x2="341.5" y2="570" stroke="#c8c8c8"/>
<line x1="349.5" y1="555" x2="349.5" y2="568" stroke="#c8c8c8"/>
<line x1="357.5" y1="555" x2="357.5" y2="572" stroke="#c8c8c8"/>
<line x1="365.5" y1="555" x2="365.5" y2="574" stroke="#c8c8c8"/>
<line x1="373.5" y1="555" x2="373.5" y2="575" stroke="#c8c8c8"/>
<line x1="381.5" y1="555" x2="381.5" y2="576" stroke="#c8c8c8"/>
<line x1="389.5" y1="555" x2="389.5" y2="576" stroke="#c8c8c8"/>
<line x1="397.5" y1="555" x2="397.5" y2="578" stroke="#c8c8c8"/>
<line x1="405.5" y1="555" x2="405.5" y2="579" stroke="#c8c8c8"/>
<line x1="413.5" y1="555" x2="413.5" y2="579" stroke="#c8c8c8"/>
<line x1="421.5" y1="555" x2="421.5" y2="578" stroke="#c8c8c8"/>
<line x1="429.5" y1="555" x2="429.5" y2="578" stroke="#c8c8c8"/>
<line x1="437.5" y1="555" x2="437.5" y2="573" stroke="#c8c8c8"/>
<line x1="445.5" y1="555" x2="445.5" y2="568" stroke="#c8c8c8"/>
<line x1="453.5" y1="555" x2="453.5" y2="564" stroke="#c8c8c8"/>
<line x1="461.5" y1="555" x2="461.5" y2="562" stroke="#c8c8c8"/>
<line x1="469.5" y1="555" x2="469.5" y2="562" stroke="#c8c8c8"/>
<line x1="477.5" y1="555" x2="477.5" y2="558" stroke="#c8c8c8"/>
<line x1="493.5" y1="554" x2="493.5" y2="556" stroke="#c8c8c8"/>
<line x1="501.5" y1="554" x2="501.5" y2="556" stroke="#c8c8c8"/>
<line x1="525.5" y1="549" x2="525.5" y2="556" stroke="#c8c8c8"/>
<line x1="533.5" y1="547" x2="533.5" y2="556" stroke="#c8c8c8"/>
<line x1="541.5" y1="547" x2="541.5" y2="556" stroke="#c8c8c8"/>
<line x1="549.5" y1="544" x2="549.5" y2="556" stroke="#c8c8c8"/>
<line x1="557.5" y1="544" x2="557.5" y2="556" stroke="#c8c8c8"/>
<line x1="565.5" y1="543" x2="565.5" y2="556" stroke="#c8c8c8"/>
<line x1="573.5" y1="543" x2="573.5" y2="556" stroke="#c8c8c8"/>
<line x1="581.5" y1="542" x2="581.5" y2="556" stroke="#c8c8c8"/>
<line x1="589.5" y1="541" x2="589.5" y2="556" stroke="#c8c8c8"/>
<line x1="597.5" y1="540" x2="597.5" y2="556" stroke="#c8c8c8"/>
<line x1="605.5" y1="544" x2="605.5" y2="556" stroke="#c8c8c8"/>
<line x1="613.5" y1="547" x2="613.5" y2="556" stroke="#c8c8c8"/>
<line x1="621.5" y1="549" x2="621.5" y2="556" stroke="#c8c8c8"/>
<line x1="629.5" y1="550" x2="629.5" y2="556" stroke="#c8c8c8"/>
<line x1="637.5" y1="550" x2="637.5" y2="556" stroke="#c8c8c8"/>
<line x1="653.5" y1="553" x2="653.5" y2="556" stroke="#c8c8c8"/>
<line x1="661.5" y1="550" x2="661.5" y2="556" stroke="#c8c8c8"/>
<line x1="669.5" y1="548" x2="669.5" y2="556" stroke="#c8c8c8"/>
<line x1="677.5" y1="547" x2="677.5" y2="556" stroke="#c8c8c8"/>
<line x1="685.5" y1="542" x2="685.5" y2="556" stroke="#c8c8c8"/>
<line x1="693.5" y1="540" x2="693.5" y2="556" stroke="#c8c8c8"/>
<line x1="701.5" y1="538" x2="701.5" y2="556" stroke="#c8c8c8"/>
<line x1="709.5" y1="536" x2="709.5" y2="556" stroke="#c8c8c8"/>
<line x1="717.5" y1="537" x2="717.5" y2="556" stroke="#c8c8c8"/>
<line x1="725.5" y1="538" x2="725.5" y2="556" stroke="#c8c8c8"/>
<line x1="733.5" y1="539" x2="733.5" y2="556" stroke="#c8c8c8"/>
<line x1="741.5" y1="541" x2="741.5" y2="556" stroke="#c8c8c8"/>
<line x1="749.5" y1="547" x2="749.5" y2="556" stroke="#c8c8c8"/>
<line x1="757.5" y1="551" x2="757.5" y2="556" stroke="#c8c8c8"/>
<line x1="765.5" y1="552" x2="765.5" y2="556" stroke="#c8c8c8"/>
<polyline points="5.5,590.2 13.5,586.9 21.5,584.5 29.5,581.9 37.5,578.5 45.5,575.2 53.5,570.5 61.5,566.9 69.5,560.5 77.5,555.5 85.5,550.5 93.5,545.5 101.5,541.1 109.5,536.8 117.5,533.8 125.5,532.5 133.5,531.8 141.5,531.3 149.5,531.3 157.5,531.8 165.5,533.0 173.5,535.5 181.5,536.3 189.5,536.3 197.5,536.3 205.5,535.5 213.5,534.3 221.5,532.5 229.5,530.5 237.5,529.3 245.5,528.8 253.5,528.8 261.5,530.5 269.5,533.5 277.5,538.0 285.5,542.5 293.5,546.3 301.5,550.0 309.5,554.3 317.5,557.5 325.5,561.3 333.5,564.3 341.5,566.8 349.5,568.0 357.5,569.3 365.5,569.8 373.5,571.3 381.5,572.5 389.5,573.5 397.5,574.8 405.5,575.5 413.5,576.3 421.5,576.8 429.5,577.5 437.5,577.5 445.5,576.8 453.5,575.0 461.5,572.5 469.5,571.3 477.5,569.3 485.5,566.0 493.5,563.0 501.5,561.0 509.5,559.8 517.5,557.5 525.5,556.4 533.5,555.1 541.5,553.1 549.5,551.4 557.5,549.8 565.5,548.5 573.5,547.3 581.5,546.3 589.5,544.8 597.5,543.8 605.5,543.5 613.5,543.8 621.5,544.3 629.5,545.1 637.5,546.3 645.5,547.5 653.5,548.8 661.5,549.8 669.5,550.5 677.5,550.5 685.5,549.8 693.5,548.8 701.5,547.3 709.5,545.5 717.5,543.8 725.5,542.3 733.5,541.3 741.5,541.0 749.5,541.0 757.5,541.8 765.5,543.0 773.5,544.3 781.5,546.8" fill="none" stroke="#ff0000" stroke-width="1" stroke-dasharray="3 3"/>
<text x="986.3" y="527" fill="#fff" text-anchor="start" textLength="27.3" lengthAdjust="spacingAndGlyphs">0.0028</text>
<line x1="983" y1="555.5" x2="985" y2="555.5" stroke="#fff" stroke-width="1"/>
<text x="986.3" y="558" fill="#fff" text-anchor="start" textLength="17.4" lengthAdjust="spacingAndGlyphs">0.00</text>
<text x="986.3" y="590" fill="#fff" text-anchor="start" textLength="35.2" lengthAdjust="spacingAndGlyphs">-0.00285</text>
<text x="8.7" y="609" fill="#fff" text-anchor="start" textLength="67.2" lengthAdjust="spacingAndGlyphs">RSI(14) 45.4423</text>
<line x1="5" y1="611.5" x2="982" y2="611.5" stroke="#d0d0d0" stroke-width="1" stroke-dasharray="3 3" stroke-dashoffset="5"/>
<line x1="5" y1="631.5" x2="982" y2="631.5" stroke="#d0d0d0" stroke-width="1" stroke-dasharray="3 3" stroke-dashoffset="5"/>
<polyline points="5.5,619.0 13.5,620.0 21.5,620.0 29.5,620.0 37.5,620.0 45.5,619.5 53.5,615.3 61.5,615.8 69.5,615.8 77.5,615.0 85.5,615.3 93.5,613.8 101.5,613.8 109.5,620.8 117.5,619.5 125.5,620.0 133.5,618.8 141.5,620.0 149.5,619.0 157.5,622.0 165.5,620.8 173.5,620.8 181.5,616.3 189.5,615.3 197.5,613.3 205.5,612.0 213.5,614.5 221.5,617.5 229.5,619.5 237.5,620.0 245.5,622.8 253.5,625.8 261.5,626.5 269.5,625.0 277.5,625.8 285.5,625.8 293.5,622.8 301.5,621.5 309.5,624.5 317.5,625.8 325.5,627.0 333.5,625.3 341.5,620.8 349.5,622.0 357.5,625.8 365.5,625.8 373.5,625.8 381.5,625.8 389.5,625.8 397.5,626.5 405.5,627.0 413.5,627.0 421.5,627.0 429.5,623.3 437.5,620.3 445.5,618.8 453.5,620.0 461.5,622.0 469.5,622.8 477.5,619.0 485.5,618.8 493.5,619.5 501.5,622.0 509.5,625.8 517.5,618.8 525.5,617.8 533.5,617.8 541.5,620.0 549.5,618.8 557.5,618.8 565.5,617.8 573.5,619.0 581.5,620.0 589.5,617.0 597.5,619.5 605.5,623.8 613.5,622.8 621.5,622.5 629.5,621.5 637.5,622.0 645.5,627.0 653.5,620.0 661.5,618.8 669.5,618.8 677.5,617.8 685.5,617.8 693.5,617.8 701.5,617.0 709.5,617.0 717.5,617.0 725.5,620.0 733.5,621.5 741.5,620.8 749.5,624.5 757.5,624.5 765.5,624.0 773.5,624.0 781.5,624.0" fill="none" stroke="#1e90ff" stroke-width="1"/>
<text x="986.3" y="605" fill="#fff" text-anchor="start" textLength="14.9" lengthAdjust="spacingAndGlyphs">100</text>
<text x="986.3" y="614" fill="#fff" text-anchor="start" textLength="9.9" lengthAdjust="spacingAndGlyphs">70</text>
<text x="986.3" y="634" fill="#fff" text-anchor="start" textLength="9.9" lengthAdjust="spacingAndGlyphs">30</text>
<text x="986.3" y="642.5" fill="#fff" text-anchor="start" textLength="5.0" lengthAdjust="spacingAndGlyphs">0</text>
<line x1="983" y1="611.5" x2="985" y2="611.5" stroke="#fff" stroke-width="1"/>
<line x1="983" y1="631.5" x2="985" y2="631.5" stroke="#fff" stroke-width="1"/>
<text x="8.7" y="662" fill="#fff" text-anchor="start" textLength="121.2" lengthAdjust="spacingAndGlyphs">Stoch(5,3,3) 43.9189 34.5581</text>
<line x1="5" y1="659.5" x2="982" y2="659.5" stroke="#d0d0d0" stroke-width="1" stroke-dasharray="3 3" stroke-dashoffset="5"/>
<line x1="5" y1="688.5" x2="982" y2="688.5" stroke="#d0d0d0" stroke-width="1" stroke-dasharray="3 3" stroke-dashoffset="5"/>
<polyline points="5.5,664.5 13.5,660.9 21.5,658.4 29.5,657.1 37.5,658.4 45.5,658.9 53.5,660.1 61.5,660.1 69.5,658.9 77.5,658.4 85.5,657.1 93.5,655.4 101.5,660.1 109.5,674.7 117.5,684.7 125.5,692.2 133.5,688.5 141.5,689.0 149.5,675.9 157.5,670.9 165.5,663.4 173.5,667.6 181.5,660.9 189.5,657.1 197.5,655.4 205.5,655.1 213.5,657.9 221.5,665.9 229.5,680.9 237.5,689.0 245.5,692.2 253.5,693.0 261.5,696.0 269.5,694.2 277.5,693.5 285.5,691.5 293.5,689.0 301.5,672.2 309.5,673.4 317.5,683.4 325.5,692.2 333.5,690.5 341.5,680.9 349.5,672.2 357.5,672.2 365.5,680.9 373.5,689.7 381.5,688.5 389.5,687.2 397.5,685.9 405.5,679.7 413.5,674.2 421.5,670.9 429.5,665.9 437.5,660.9 445.5,655.9 453.5,655.9 461.5,660.9 469.5,668.4 477.5,670.9 485.5,667.1 493.5,663.9 501.5,672.2 509.5,682.9 517.5,674.7 525.5,667.1 533.5,658.9 541.5,662.1 549.5,662.6 557.5,665.9 565.5,665.4 573.5,670.2 581.5,667.9 589.5,670.9 597.5,676.4 605.5,683.4 613.5,689.0 621.5,689.7 629.5,685.9 637.5,682.9 645.5,682.2 653.5,672.9 661.5,665.4 669.5,653.9 677.5,652.9 685.5,654.1 693.5,655.9 701.5,658.4 709.5,661.6 717.5,664.6 725.5,673.4 733.5,683.4 741.5,685.9 749.5,687.9 757.5,687.2 765.5,685.2 773.5,682.2 781.5,677.7" fill="none" stroke="#20b2aa" stroke-width="1"/>
<polyline points="5.5,672.2 13.5,665.9 21.5,662.1 29.5,659.6 37.5,658.9 45.5,658.9 53.5,659.6 61.5,660.1 69.5,660.1 77.5,659.6 85.5,658.4 93.5,657.1 101.5,657.1 109.5,663.4 117.5,673.4 125.5,683.4 133.5,688.5 141.5,689.7 149.5,684.7 157.5,678.4 165.5,670.9 173.5,667.1 181.5,663.9 189.5,662.1 197.5,658.4 205.5,655.9 213.5,655.9 221.5,658.9 229.5,667.1 237.5,678.4 245.5,687.2 253.5,691.0 261.5,694.7 269.5,695.2 277.5,694.7 285.5,693.0 293.5,689.7 301.5,684.7 309.5,678.4 317.5,677.2 325.5,682.9 333.5,688.5 341.5,687.9 349.5,680.9 357.5,675.4 365.5,675.2 373.5,680.9 381.5,686.5 389.5,688.5 397.5,687.7 405.5,684.7 413.5,680.2 421.5,674.7 429.5,670.2 437.5,665.9 445.5,660.9 453.5,657.9 461.5,658.9 469.5,662.1 477.5,666.4 485.5,668.4 493.5,667.1 501.5,668.4 509.5,672.9 517.5,675.9 525.5,673.4 533.5,666.4 541.5,662.1 549.5,661.6 557.5,663.4 565.5,664.6 573.5,667.1 581.5,667.9 589.5,669.7 597.5,671.7 605.5,677.2 613.5,683.4 621.5,687.7 629.5,688.5 637.5,685.9 645.5,683.9 653.5,678.9 661.5,673.4 669.5,663.9 677.5,657.1 685.5,653.9 693.5,654.1 701.5,655.9 709.5,658.4 717.5,661.6 725.5,666.6 733.5,673.9 741.5,681.4 749.5,685.9 757.5,687.2 765.5,686.7 773.5,684.2 781.5,682.9" fill="none" stroke="#ff0000" stroke-width="1" stroke-dasharray="3 3"/>
<text x="988" y="658" fill="#fff" text-anchor="start" textLength="14.9" lengthAdjust="spacingAndGlyphs">100</text>
<text x="986.3" y="662" fill="#fff" text-anchor="start" textLength="9.9" lengthAdjust="spacingAndGlyphs">80</text>
<text x="988" y="691" fill="#fff" text-anchor="start" textLength="9.9" lengthAdjust="spacingAndGlyphs">20</text>
<text x="986.3" y="694.5" fill="#fff" text-anchor="start" textLength="5.0" lengthAdjust="spacingAndGlyphs">0</text>
<line x1="983" y1="659.5" x2="985" y2="659.5" stroke="#fff" stroke-width="1"/>
<line x1="983" y1="688.5" x2="985" y2="688.5" stroke="#fff" stroke-width="1"/>
</svg>
<!-- status bar -->
<span class="st" style="left:2px">For Help, press F1</span>
<span class="st" style="left:158px">Default</span>
<div class="sep" style="left:153px;top:719px;height:18px"></div>
<div class="sep" style="left:316px;top:719px;height:18px"></div>
<div class="sep" style="left:433px;top:719px;height:18px"></div>
<div class="sep" style="left:518px;top:719px;height:18px"></div>
<div class="sep" style="left:604px;top:719px;height:18px"></div>
<div class="sep" style="left:691px;top:719px;height:18px"></div>
<div class="sep" style="left:777px;top:719px;height:18px"></div>
<!-- taskbar strip -->
<div style="left:0;top:738px;width:1024px;height:4px;background:#3a80ea"></div>
<div style="left:0;top:738px;width:93px;height:4px;background:#3c9a3c"></div>
<div style="left:893px;top:738px;width:131px;height:4px;background:#1ea2ea"></div>
<!-- language bar -->
<div id="lang" style="left:806px;top:712px;width:194px;height:26px;background:#2c5cd6"></div>
<div style="left:808px;top:716px;width:3px;height:19px;background:repeating-linear-gradient(#6f96ea 0,#6f96ea 1px,transparent 1px,transparent 3px);opacity:.8"></div>
<div style="left:816px;top:715px;width:21px;height:20px;background:#3f6fe0"></div>
<span style="left:820px;top:718px;color:#fff;font-size:13px;line-height:14px;letter-spacing:-0.8px">CH</span>
<div style="left:840px;top:717px;width:16px;height:16px;background:#111"></div>
<span style="left:841px;top:717px;color:#fff;font:bold 8px/8px 'Liberation Sans',sans-serif;letter-spacing:-0.3px">MS</span>
<span style="left:841px;top:725px;font:bold 8px/8px 'Liberation Sans',sans-serif;letter-spacing:-0.3px"><b style="color:#ffe020">P</b><b style="color:#ff3030;background:#ffe020">Y</b></span>
<span style="left:861px;top:716px;color:#fff;font:9px/9px 'Liberation Sans','Noto Sans CJK SC',sans-serif">体</span>
<span style="left:867px;top:724px;color:#fff;font:9px/9px 'Liberation Sans','Noto Sans CJK SC',sans-serif">验</span>
<svg style="left:858px;top:714px" width="22" height="22" viewBox="0 0 22 22"><path d="M4.500 11v8.500h3M17.500 10v-6.500h-3" fill="none" stroke="#fff"/></svg>
<span style="left:880px;top:715px;color:#fff;font-size:16px;line-height:20px;font-family:'Liberation Sans','Noto Sans CJK SC',sans-serif">英</span>
<svg style="left:900px;top:714px" width="100" height="24" viewBox="0 0 100 24">
<path d="M10 3.500a7 7 0 1 1 -7 9.500a6 6 0 0 0 7 -9.500z" fill="#fff"/>
<rect x="24" y="6" width="3" height="3" fill="#fff"/><path d="M31.500 10.500v2l-1.500 2" stroke="#fff" fill="none"/>
<rect x="40.500" y="4.500" width="10" height="12" fill="#fff" stroke="#223" /><path d="M41 6.500h9M41 9.500h9M41 12.500h9" stroke="#224" /><rect x="41" y="5" width="9" height="2" fill="#1a3aa0"/>
<path d="M50.500 7.500v10l2.500 -2.500 2 4 1.500 -0.800 -2 -3.800h3.500z" fill="#fff" stroke="#000" stroke-width="0.800"/>
<path d="M63.500 4.500h12v11h-6l-2 2v-2h-4z" fill="#ffffc8" stroke="#444" />
<rect x="89" y="5" width="5" height="2" fill="#fff"/><path d="M89 13.500h5l-2.500 3z" fill="#fff"/>
</svg>
<span style="left:966px;top:717px;color:#1a2a90;font:bold 12px/14px 'Liberation Sans',sans-serif">?</span>
<svg style="left:1008px;top:724px" width="16" height="14" viewBox="0 0 16 14"><path d="M3 14l11 -11M7 14l7 -7M11 14l3 -3" stroke="#b0ac9c" stroke-width="1.200"/><path d="M4 14l11 -11M8 14l7 -7M12 14l3 -3" stroke="#fff" stroke-width="0.800"/></svg>
</body></html>
